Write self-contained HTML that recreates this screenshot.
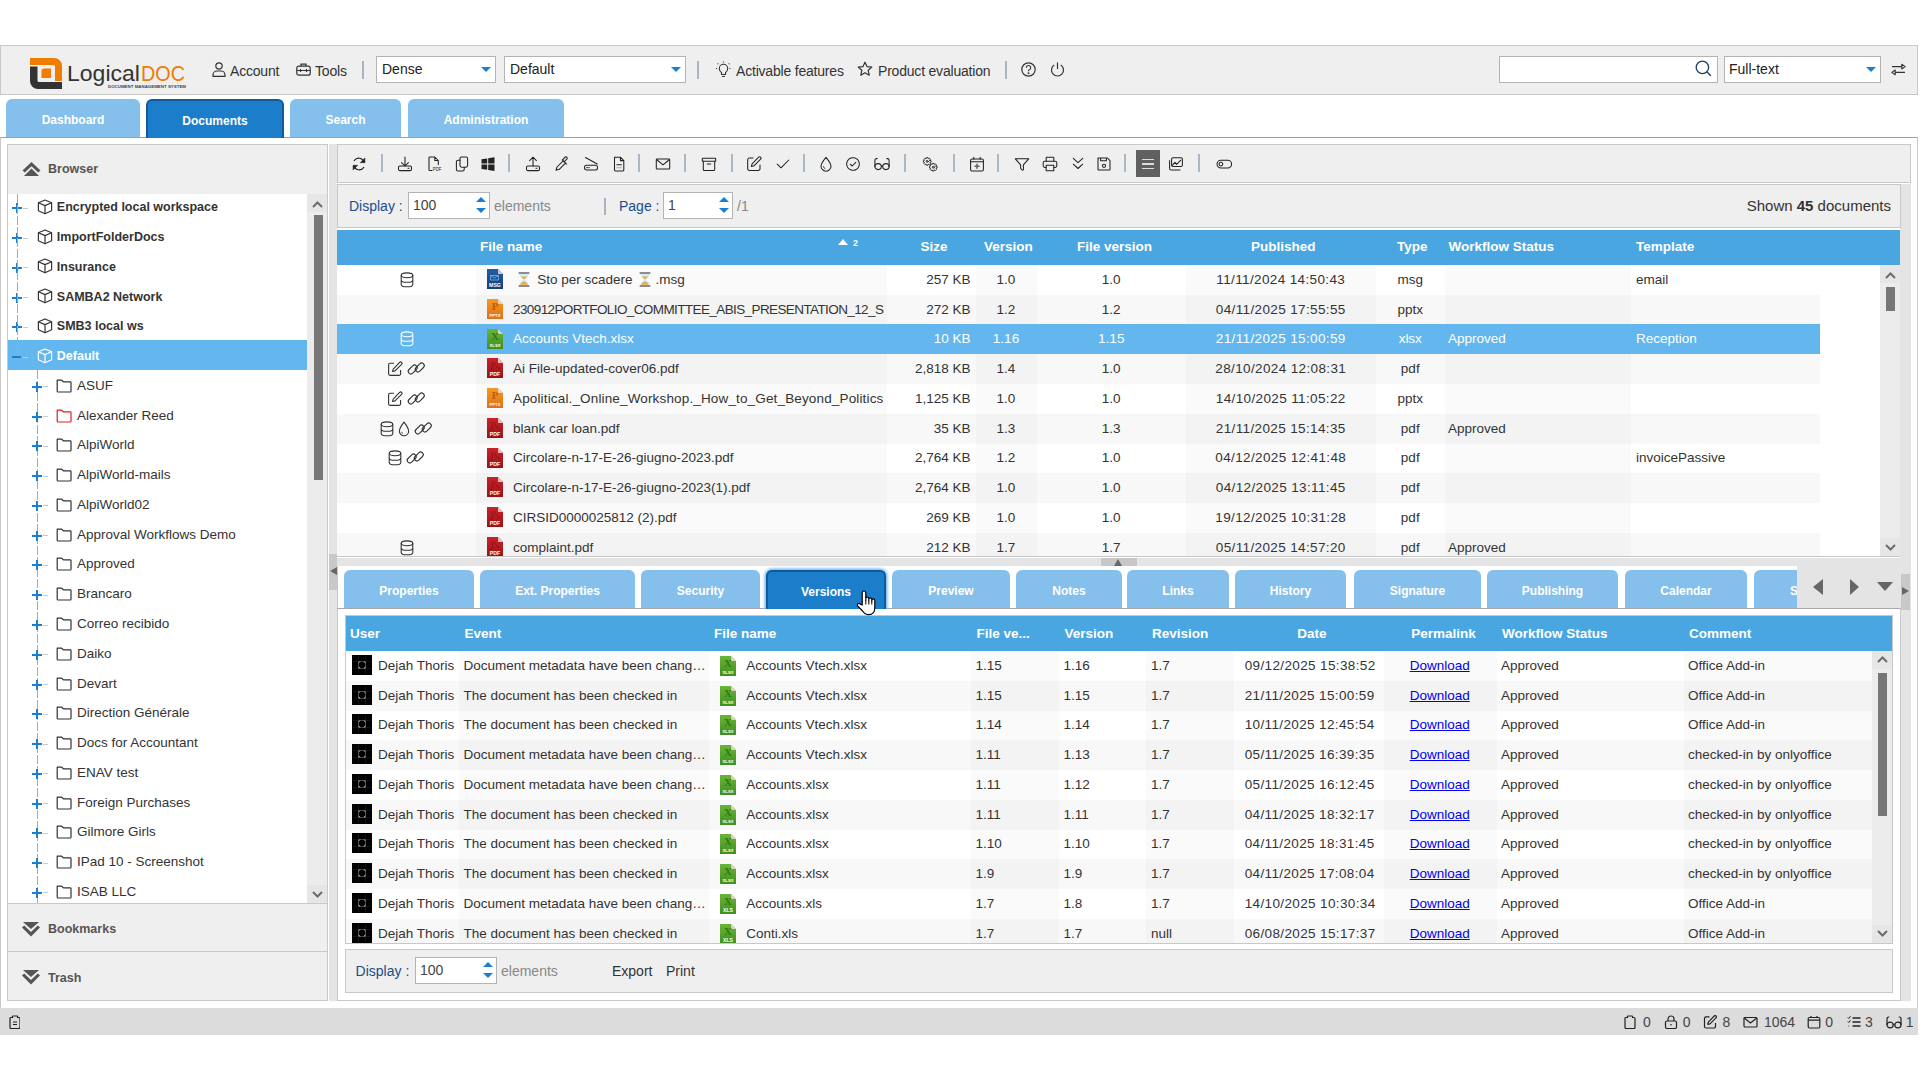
<!DOCTYPE html>
<html><head><meta charset="utf-8">
<style>
*{box-sizing:border-box;margin:0;padding:0}
html,body{width:1920px;height:1080px;overflow:hidden;background:#fff;font-family:"Liberation Sans",sans-serif;color:#333}
.a{position:absolute}
#hdr{left:0;top:45px;width:1918px;height:50px;background:#efefef;border:1px solid #c8c8c8}
.tab{position:absolute;top:99px;height:38px;background:#85bfec;border-radius:6px 6px 0 0;color:#fff;font-weight:bold;font-size:12px;text-align:center;line-height:43px}
.tab.on{background:#1c7ecb;border:2px solid #0e5a9c;border-bottom:0;line-height:41px;height:39px}
#main{left:0;top:137px;width:1918px;height:872px;border:1px solid #c8c8c8;border-top-color:#a0a0a0;border-bottom:0;background:#fff}
#status{left:0;top:1008px;width:1918px;height:27px;background:#dcdcdc}
.panel{position:absolute;background:#efefef;border:1px solid #c8c8c8}
.htxt{position:absolute;top:60.5px;height:20px;line-height:20px;font-size:14px;letter-spacing:-0.2px;color:#333;white-space:nowrap}
.hsep{position:absolute;top:61px;width:2px;height:18px;background:#a9b4c0}
.dd{position:absolute;top:56px;height:27px;background:#fff;border:1px solid #b4b4b4;font-size:14px;line-height:25px;padding-left:5px;color:#222}
.dd i{position:absolute;right:4px;top:10px;border-left:5px solid transparent;border-right:5px solid transparent;border-top:5px solid #1a7fd0}
.phd{position:absolute;font-weight:bold;font-size:12.5px;color:#555;line-height:20px;white-space:nowrap}
.tr{font-size:13.5px;line-height:20px;white-space:nowrap;color:#333}
.tr.b{font-weight:bold;font-size:12.5px}
.vdash{width:1px;background:repeating-linear-gradient(#aaa 0 9px,transparent 9px 11px)}
.lbl{font-size:14px;line-height:22px;color:#1a4d8c;white-space:nowrap}
.inp{height:27px;background:#fff;border:1px solid #b4b4b4;font-size:14px;line-height:25px;padding-left:4px;color:#444}
.gh{color:#fff;font-weight:bold;font-size:13.5px;line-height:20px;white-space:nowrap}
.gc{font-size:13.5px;line-height:20px;white-space:nowrap;color:#333}
.dt{letter-spacing:0.37px}
.dtab{position:absolute;top:4px;height:38px;background:#85bfec;border-radius:6px 6px 0 0;color:#fff;font-weight:bold;font-size:12px;text-align:center;line-height:42px;white-space:nowrap;overflow:hidden}
.dtab.on{height:39px;background:#1c7ecb;border:2px solid #0e5a9c;border-bottom:0;line-height:40px;box-shadow:0 0 3px 1px rgba(120,190,245,0.9)}
.stt{top:1012px;font-size:14px;line-height:20px;color:#444}
</style></head><body>
<div id="hdr" class="a"></div>
<svg class="a" style="left:30px;top:58px" width="32" height="31" viewBox="0 0 32 31">
<path d="M0 0H24A8 8 0 0 1 32 8V23H25V8.5A1.5 1.5 0 0 0 23.5 7H0Z" fill="#f07c00"/>
<path d="M0 8.5H7.5V22.5A1.5 1.5 0 0 0 9 24H32V31H8A8 8 0 0 1 0 23Z" fill="#333"/>
<path d="M14 10.5H21V20H11.5V13A2.5 2.5 0 0 1 14 10.5Z" fill="#f07c00"/>
</svg>
<svg class="a" style="left:66px;top:58px" width="124" height="34" viewBox="0 0 124 34">
<text x="1" y="22.5" font-family="Liberation Sans" font-size="22.5" fill="#333" textLength="73" lengthAdjust="spacingAndGlyphs">Logical</text>
<text x="75" y="22.5" font-family="Liberation Sans" font-size="22.5" fill="#f07c00" textLength="44" lengthAdjust="spacingAndGlyphs">DOC</text>
<text x="42" y="30" font-family="Liberation Sans" font-size="4.2" font-weight="bold" fill="#444" textLength="78" lengthAdjust="spacingAndGlyphs">DOCUMENT MANAGEMENT SYSTEM</text>
</svg>
<div class="htxt" style="left:230px">Account</div>
<svg class="a" style="left:212px;top:62px" width="14" height="15" viewBox="0 0 14 15" fill="none" stroke="#333" stroke-width="1.2"><circle cx="7" cy="4" r="3.2"/><path d="M1 14.4V13A4 4 0 0 1 5 9H9A4 4 0 0 1 13 13V14.4Z"/></svg>
<div class="htxt" style="left:315px">Tools</div>
<svg class="a" style="left:296px;top:63px" width="15" height="13" viewBox="0 0 15 13" fill="none" stroke="#333" stroke-width="1.2"><path d="M5 3V1.2H10V3"/><rect x="0.8" y="3.2" width="13.4" height="9" rx="2"/><path d="M0.8 7.5H14.2M4.5 6V9M10.5 6V9"/></svg>
<div class="hsep" style="left:362px"></div>
<div class="dd" style="left:376px;width:120px">Dense<i></i></div>
<div class="dd" style="left:504px;width:182px">Default<i></i></div>
<div class="hsep" style="left:697px"></div>
<svg class="a" style="left:715px;top:61px" width="17" height="17" viewBox="0 0 17 17" fill="none" stroke="#333" stroke-width="1.1"><path d="M6.5 13.5V11.5C5 10.5 4.3 9 4.3 7.5A4.2 4.2 0 0 1 12.7 7.5C12.7 9 12 10.5 10.5 11.5V13.5ZM7 15.5H10"/><path d="M1 7.5H2.5M14.5 7.5H16M2.5 2.5L3.5 3.5M14.5 2.5L13.5 3.5M8.5 0.5V1.8" stroke-dasharray="1 0.6"/></svg>
<div class="htxt" style="left:736px">Activable features</div>
<svg class="a" style="left:857px;top:61px" width="16" height="16" viewBox="0 0 16 16" fill="none" stroke="#333" stroke-width="1.2" stroke-linejoin="round"><path d="M8 1.2L10 5.6L14.8 6.1L11.2 9.3L12.2 14.2L8 11.7L3.8 14.2L4.8 9.3L1.2 6.1L6 5.6Z"/></svg>
<div class="htxt" style="left:878px">Product evaluation</div>
<div class="hsep" style="left:1005px"></div>
<svg class="a" style="left:1021px;top:62px" width="15" height="15" viewBox="0 0 15 15" fill="none" stroke="#333" stroke-width="1.2"><circle cx="7.5" cy="7.5" r="6.7"/><path d="M5.3 5.7A2.2 2.2 0 1 1 8.2 7.8C7.6 8.1 7.5 8.5 7.5 9.3"/><circle cx="7.5" cy="11.2" r="0.4" fill="#333"/></svg>
<svg class="a" style="left:1050px;top:62px" width="15" height="15" viewBox="0 0 15 15" fill="none" stroke="#333" stroke-width="1.2"><path d="M4.2 3A6 6 0 1 0 10.8 3M7.5 0.5V7"/></svg>
<div class="a" style="left:1499px;top:56px;width:219px;height:27px;background:#fff;border:1px solid #b4b4b4"></div>
<svg class="a" style="left:1695px;top:60px" width="17" height="17" viewBox="0 0 17 17" fill="none" stroke="#1b3f6b" stroke-width="1.3"><circle cx="7.4" cy="7.4" r="6.2"/><path d="M11.8 11.8L15.8 15.8"/></svg>
<div class="dd" style="left:1724px;width:157px;padding-left:4px">Full-text<i></i></div>
<svg class="a" style="left:1891px;top:63px" width="15" height="13" viewBox="0 0 15 13" fill="none" stroke="#333" stroke-width="1.1" stroke-linejoin="round"><path d="M1 3.6H10.8M10.8 1.2L14.2 3.6L10.8 6Z M14 9.4H4.2M4.2 7L0.8 9.4L4.2 11.8Z"/></svg>
<div id="main" class="a"></div>
<div class="tab" style="left:6px;width:134px">Dashboard</div>
<div class="tab on" style="left:146px;width:138px">Documents</div>
<div class="tab" style="left:290px;width:111px">Search</div>
<div class="tab" style="left:408px;width:156px">Administration</div>
<div id="status" class="a"></div>
<div class="panel" style="left:7px;top:144px;width:321px;height:51px"></div>
<svg class="a" style="left:22px;top:162px" width="19" height="14" viewBox="0 0 19 14"><path d="M9.5 0L18.5 8.5L16.2 10.6L9.5 4.2L2.8 10.6L0.5 8.5Z" fill="#555"/><path d="M9.5 6.5L17 14H2Z" fill="#555"/></svg>
<div class="phd" style="left:48px;top:159px">Browser</div>
<div class="a" style="left:7px;top:194px;width:321px;height:710px;border:1px solid #c8c8c8;border-top:0;background:#fff;overflow:hidden">
<div class="a vdash" style="left:29px;top:176.2px;height:533.8px"></div>
<div class="a" style="left:4px;top:13.2px;width:10px;height:2px;background:#1a7fd0"></div><div class="a" style="left:8px;top:9.2px;width:2px;height:10px;background:#1a7fd0"></div>
<div class="a" style="left:15px;top:13.7px;width:5px;height:1px;background:#c8c8c8"></div>
<div class="a" style="left:28.5px;top:4.7px"><svg width="16" height="16" viewBox="0 0 16 16" fill="none" stroke="#333" stroke-width="1.2" stroke-linejoin="round"><path d="M8 1L14.6 3.8V11.8L8 14.8L1.4 11.8V3.8Z"/><path d="M1.4 3.8L8 6.6L14.6 3.8M8 6.6V14.8"/></svg></div>
<div class="a tr b" style="left:48.8px;top:3.2px;">Encrypted local workspace</div>
<div class="a" style="left:4px;top:43.0px;width:10px;height:2px;background:#1a7fd0"></div><div class="a" style="left:8px;top:39.0px;width:2px;height:10px;background:#1a7fd0"></div>
<div class="a" style="left:15px;top:43.5px;width:5px;height:1px;background:#c8c8c8"></div>
<div class="a" style="left:28.5px;top:34.5px"><svg width="16" height="16" viewBox="0 0 16 16" fill="none" stroke="#333" stroke-width="1.2" stroke-linejoin="round"><path d="M8 1L14.6 3.8V11.8L8 14.8L1.4 11.8V3.8Z"/><path d="M1.4 3.8L8 6.6L14.6 3.8M8 6.6V14.8"/></svg></div>
<div class="a tr b" style="left:48.8px;top:33.0px;">ImportFolderDocs</div>
<div class="a" style="left:4px;top:72.7px;width:10px;height:2px;background:#1a7fd0"></div><div class="a" style="left:8px;top:68.7px;width:2px;height:10px;background:#1a7fd0"></div>
<div class="a" style="left:15px;top:73.2px;width:5px;height:1px;background:#c8c8c8"></div>
<div class="a" style="left:28.5px;top:64.2px"><svg width="16" height="16" viewBox="0 0 16 16" fill="none" stroke="#333" stroke-width="1.2" stroke-linejoin="round"><path d="M8 1L14.6 3.8V11.8L8 14.8L1.4 11.8V3.8Z"/><path d="M1.4 3.8L8 6.6L14.6 3.8M8 6.6V14.8"/></svg></div>
<div class="a tr b" style="left:48.8px;top:62.7px;">Insurance</div>
<div class="a" style="left:4px;top:102.5px;width:10px;height:2px;background:#1a7fd0"></div><div class="a" style="left:8px;top:98.5px;width:2px;height:10px;background:#1a7fd0"></div>
<div class="a" style="left:15px;top:103.0px;width:5px;height:1px;background:#c8c8c8"></div>
<div class="a" style="left:28.5px;top:94.0px"><svg width="16" height="16" viewBox="0 0 16 16" fill="none" stroke="#333" stroke-width="1.2" stroke-linejoin="round"><path d="M8 1L14.6 3.8V11.8L8 14.8L1.4 11.8V3.8Z"/><path d="M1.4 3.8L8 6.6L14.6 3.8M8 6.6V14.8"/></svg></div>
<div class="a tr b" style="left:48.8px;top:92.5px;">SAMBA2 Network</div>
<div class="a" style="left:4px;top:132.3px;width:10px;height:2px;background:#1a7fd0"></div><div class="a" style="left:8px;top:128.3px;width:2px;height:10px;background:#1a7fd0"></div>
<div class="a" style="left:15px;top:132.8px;width:5px;height:1px;background:#c8c8c8"></div>
<div class="a" style="left:28.5px;top:123.8px"><svg width="16" height="16" viewBox="0 0 16 16" fill="none" stroke="#333" stroke-width="1.2" stroke-linejoin="round"><path d="M8 1L14.6 3.8V11.8L8 14.8L1.4 11.8V3.8Z"/><path d="M1.4 3.8L8 6.6L14.6 3.8M8 6.6V14.8"/></svg></div>
<div class="a tr b" style="left:48.8px;top:122.3px;">SMB3 local ws</div>
<div class="a" style="left:0;top:146.45px;width:299px;height:29.77px;background:#63b7ee"></div>
<div class="a" style="left:4px;top:162.0px;width:9px;height:2px;background:#1a7fd0"></div>
<div class="a" style="left:15px;top:162.5px;width:5px;height:1px;background:#c8c8c8"></div>
<div class="a" style="left:28.5px;top:153.5px"><svg width="16" height="16" viewBox="0 0 16 16" fill="none" stroke="#fff" stroke-width="1.2" stroke-linejoin="round"><path d="M8 1L14.6 3.8V11.8L8 14.8L1.4 11.8V3.8Z"/><path d="M1.4 3.8L8 6.6L14.6 3.8M8 6.6V14.8"/></svg></div>
<div class="a tr b" style="left:48.8px;top:152.0px;color:#fff">Default</div>
<div class="a" style="left:24px;top:191.8px;width:10px;height:2px;background:#1a7fd0"></div><div class="a" style="left:28px;top:187.8px;width:2px;height:10px;background:#1a7fd0"></div>
<div class="a" style="left:35px;top:192.3px;width:5px;height:1px;background:#c8c8c8"></div>
<div class="a" style="left:48px;top:184.8px"><svg width="16" height="14" viewBox="0 0 16 14" fill="none" stroke="#333" stroke-width="1.2" stroke-linejoin="round"><path d="M1.2 1.2H5.6L7.4 2.8H14.2A0.8 0.8 0 0 1 15 3.6V12.2A0.8 0.8 0 0 1 14.2 13H2A0.8 0.8 0 0 1 1.2 12.2Z"/></svg></div>
<div class="a tr" style="left:69px;top:181.8px">ASUF</div>
<div class="a" style="left:24px;top:221.6px;width:10px;height:2px;background:#1a7fd0"></div><div class="a" style="left:28px;top:217.6px;width:2px;height:10px;background:#1a7fd0"></div>
<div class="a" style="left:35px;top:222.1px;width:5px;height:1px;background:#c8c8c8"></div>
<div class="a" style="left:48px;top:214.6px"><svg width="16" height="14" viewBox="0 0 16 14" fill="none" stroke="#e02020" stroke-width="1.2" stroke-linejoin="round"><path d="M1.2 1.2H5.6L7.4 2.8H14.2A0.8 0.8 0 0 1 15 3.6V12.2A0.8 0.8 0 0 1 14.2 13H2A0.8 0.8 0 0 1 1.2 12.2Z"/></svg></div>
<div class="a tr" style="left:69px;top:211.6px">Alexander Reed</div>
<div class="a" style="left:24px;top:251.3px;width:10px;height:2px;background:#1a7fd0"></div><div class="a" style="left:28px;top:247.3px;width:2px;height:10px;background:#1a7fd0"></div>
<div class="a" style="left:35px;top:251.8px;width:5px;height:1px;background:#c8c8c8"></div>
<div class="a" style="left:48px;top:244.3px"><svg width="16" height="14" viewBox="0 0 16 14" fill="none" stroke="#333" stroke-width="1.2" stroke-linejoin="round"><path d="M1.2 1.2H5.6L7.4 2.8H14.2A0.8 0.8 0 0 1 15 3.6V12.2A0.8 0.8 0 0 1 14.2 13H2A0.8 0.8 0 0 1 1.2 12.2Z"/></svg></div>
<div class="a tr" style="left:69px;top:241.3px">AlpiWorld</div>
<div class="a" style="left:24px;top:281.1px;width:10px;height:2px;background:#1a7fd0"></div><div class="a" style="left:28px;top:277.1px;width:2px;height:10px;background:#1a7fd0"></div>
<div class="a" style="left:35px;top:281.6px;width:5px;height:1px;background:#c8c8c8"></div>
<div class="a" style="left:48px;top:274.1px"><svg width="16" height="14" viewBox="0 0 16 14" fill="none" stroke="#333" stroke-width="1.2" stroke-linejoin="round"><path d="M1.2 1.2H5.6L7.4 2.8H14.2A0.8 0.8 0 0 1 15 3.6V12.2A0.8 0.8 0 0 1 14.2 13H2A0.8 0.8 0 0 1 1.2 12.2Z"/></svg></div>
<div class="a tr" style="left:69px;top:271.1px">AlpiWorld-mails</div>
<div class="a" style="left:24px;top:310.9px;width:10px;height:2px;background:#1a7fd0"></div><div class="a" style="left:28px;top:306.9px;width:2px;height:10px;background:#1a7fd0"></div>
<div class="a" style="left:35px;top:311.4px;width:5px;height:1px;background:#c8c8c8"></div>
<div class="a" style="left:48px;top:303.9px"><svg width="16" height="14" viewBox="0 0 16 14" fill="none" stroke="#333" stroke-width="1.2" stroke-linejoin="round"><path d="M1.2 1.2H5.6L7.4 2.8H14.2A0.8 0.8 0 0 1 15 3.6V12.2A0.8 0.8 0 0 1 14.2 13H2A0.8 0.8 0 0 1 1.2 12.2Z"/></svg></div>
<div class="a tr" style="left:69px;top:300.9px">AlpiWorld02</div>
<div class="a" style="left:24px;top:340.7px;width:10px;height:2px;background:#1a7fd0"></div><div class="a" style="left:28px;top:336.7px;width:2px;height:10px;background:#1a7fd0"></div>
<div class="a" style="left:35px;top:341.2px;width:5px;height:1px;background:#c8c8c8"></div>
<div class="a" style="left:48px;top:333.7px"><svg width="16" height="14" viewBox="0 0 16 14" fill="none" stroke="#333" stroke-width="1.2" stroke-linejoin="round"><path d="M1.2 1.2H5.6L7.4 2.8H14.2A0.8 0.8 0 0 1 15 3.6V12.2A0.8 0.8 0 0 1 14.2 13H2A0.8 0.8 0 0 1 1.2 12.2Z"/></svg></div>
<div class="a tr" style="left:69px;top:330.7px">Approval Workflows Demo</div>
<div class="a" style="left:24px;top:370.4px;width:10px;height:2px;background:#1a7fd0"></div><div class="a" style="left:28px;top:366.4px;width:2px;height:10px;background:#1a7fd0"></div>
<div class="a" style="left:35px;top:370.9px;width:5px;height:1px;background:#c8c8c8"></div>
<div class="a" style="left:48px;top:363.4px"><svg width="16" height="14" viewBox="0 0 16 14" fill="none" stroke="#333" stroke-width="1.2" stroke-linejoin="round"><path d="M1.2 1.2H5.6L7.4 2.8H14.2A0.8 0.8 0 0 1 15 3.6V12.2A0.8 0.8 0 0 1 14.2 13H2A0.8 0.8 0 0 1 1.2 12.2Z"/></svg></div>
<div class="a tr" style="left:69px;top:360.4px">Approved</div>
<div class="a" style="left:24px;top:400.2px;width:10px;height:2px;background:#1a7fd0"></div><div class="a" style="left:28px;top:396.2px;width:2px;height:10px;background:#1a7fd0"></div>
<div class="a" style="left:35px;top:400.7px;width:5px;height:1px;background:#c8c8c8"></div>
<div class="a" style="left:48px;top:393.2px"><svg width="16" height="14" viewBox="0 0 16 14" fill="none" stroke="#333" stroke-width="1.2" stroke-linejoin="round"><path d="M1.2 1.2H5.6L7.4 2.8H14.2A0.8 0.8 0 0 1 15 3.6V12.2A0.8 0.8 0 0 1 14.2 13H2A0.8 0.8 0 0 1 1.2 12.2Z"/></svg></div>
<div class="a tr" style="left:69px;top:390.2px">Brancaro</div>
<div class="a" style="left:24px;top:430.0px;width:10px;height:2px;background:#1a7fd0"></div><div class="a" style="left:28px;top:426.0px;width:2px;height:10px;background:#1a7fd0"></div>
<div class="a" style="left:35px;top:430.5px;width:5px;height:1px;background:#c8c8c8"></div>
<div class="a" style="left:48px;top:423.0px"><svg width="16" height="14" viewBox="0 0 16 14" fill="none" stroke="#333" stroke-width="1.2" stroke-linejoin="round"><path d="M1.2 1.2H5.6L7.4 2.8H14.2A0.8 0.8 0 0 1 15 3.6V12.2A0.8 0.8 0 0 1 14.2 13H2A0.8 0.8 0 0 1 1.2 12.2Z"/></svg></div>
<div class="a tr" style="left:69px;top:420.0px">Correo recibido</div>
<div class="a" style="left:24px;top:459.7px;width:10px;height:2px;background:#1a7fd0"></div><div class="a" style="left:28px;top:455.7px;width:2px;height:10px;background:#1a7fd0"></div>
<div class="a" style="left:35px;top:460.2px;width:5px;height:1px;background:#c8c8c8"></div>
<div class="a" style="left:48px;top:452.7px"><svg width="16" height="14" viewBox="0 0 16 14" fill="none" stroke="#333" stroke-width="1.2" stroke-linejoin="round"><path d="M1.2 1.2H5.6L7.4 2.8H14.2A0.8 0.8 0 0 1 15 3.6V12.2A0.8 0.8 0 0 1 14.2 13H2A0.8 0.8 0 0 1 1.2 12.2Z"/></svg></div>
<div class="a tr" style="left:69px;top:449.7px">Daiko</div>
<div class="a" style="left:24px;top:489.5px;width:10px;height:2px;background:#1a7fd0"></div><div class="a" style="left:28px;top:485.5px;width:2px;height:10px;background:#1a7fd0"></div>
<div class="a" style="left:35px;top:490.0px;width:5px;height:1px;background:#c8c8c8"></div>
<div class="a" style="left:48px;top:482.5px"><svg width="16" height="14" viewBox="0 0 16 14" fill="none" stroke="#333" stroke-width="1.2" stroke-linejoin="round"><path d="M1.2 1.2H5.6L7.4 2.8H14.2A0.8 0.8 0 0 1 15 3.6V12.2A0.8 0.8 0 0 1 14.2 13H2A0.8 0.8 0 0 1 1.2 12.2Z"/></svg></div>
<div class="a tr" style="left:69px;top:479.5px">Devart</div>
<div class="a" style="left:24px;top:519.3px;width:10px;height:2px;background:#1a7fd0"></div><div class="a" style="left:28px;top:515.3px;width:2px;height:10px;background:#1a7fd0"></div>
<div class="a" style="left:35px;top:519.8px;width:5px;height:1px;background:#c8c8c8"></div>
<div class="a" style="left:48px;top:512.3px"><svg width="16" height="14" viewBox="0 0 16 14" fill="none" stroke="#333" stroke-width="1.2" stroke-linejoin="round"><path d="M1.2 1.2H5.6L7.4 2.8H14.2A0.8 0.8 0 0 1 15 3.6V12.2A0.8 0.8 0 0 1 14.2 13H2A0.8 0.8 0 0 1 1.2 12.2Z"/></svg></div>
<div class="a tr" style="left:69px;top:509.3px">Direction Générale</div>
<div class="a" style="left:24px;top:549.0px;width:10px;height:2px;background:#1a7fd0"></div><div class="a" style="left:28px;top:545.0px;width:2px;height:10px;background:#1a7fd0"></div>
<div class="a" style="left:35px;top:549.5px;width:5px;height:1px;background:#c8c8c8"></div>
<div class="a" style="left:48px;top:542.0px"><svg width="16" height="14" viewBox="0 0 16 14" fill="none" stroke="#333" stroke-width="1.2" stroke-linejoin="round"><path d="M1.2 1.2H5.6L7.4 2.8H14.2A0.8 0.8 0 0 1 15 3.6V12.2A0.8 0.8 0 0 1 14.2 13H2A0.8 0.8 0 0 1 1.2 12.2Z"/></svg></div>
<div class="a tr" style="left:69px;top:539.0px">Docs for Accountant</div>
<div class="a" style="left:24px;top:578.8px;width:10px;height:2px;background:#1a7fd0"></div><div class="a" style="left:28px;top:574.8px;width:2px;height:10px;background:#1a7fd0"></div>
<div class="a" style="left:35px;top:579.3px;width:5px;height:1px;background:#c8c8c8"></div>
<div class="a" style="left:48px;top:571.8px"><svg width="16" height="14" viewBox="0 0 16 14" fill="none" stroke="#333" stroke-width="1.2" stroke-linejoin="round"><path d="M1.2 1.2H5.6L7.4 2.8H14.2A0.8 0.8 0 0 1 15 3.6V12.2A0.8 0.8 0 0 1 14.2 13H2A0.8 0.8 0 0 1 1.2 12.2Z"/></svg></div>
<div class="a tr" style="left:69px;top:568.8px">ENAV test</div>
<div class="a" style="left:24px;top:608.6px;width:10px;height:2px;background:#1a7fd0"></div><div class="a" style="left:28px;top:604.6px;width:2px;height:10px;background:#1a7fd0"></div>
<div class="a" style="left:35px;top:609.1px;width:5px;height:1px;background:#c8c8c8"></div>
<div class="a" style="left:48px;top:601.6px"><svg width="16" height="14" viewBox="0 0 16 14" fill="none" stroke="#333" stroke-width="1.2" stroke-linejoin="round"><path d="M1.2 1.2H5.6L7.4 2.8H14.2A0.8 0.8 0 0 1 15 3.6V12.2A0.8 0.8 0 0 1 14.2 13H2A0.8 0.8 0 0 1 1.2 12.2Z"/></svg></div>
<div class="a tr" style="left:69px;top:598.6px">Foreign Purchases</div>
<div class="a" style="left:24px;top:638.4px;width:10px;height:2px;background:#1a7fd0"></div><div class="a" style="left:28px;top:634.4px;width:2px;height:10px;background:#1a7fd0"></div>
<div class="a" style="left:35px;top:638.9px;width:5px;height:1px;background:#c8c8c8"></div>
<div class="a" style="left:48px;top:631.4px"><svg width="16" height="14" viewBox="0 0 16 14" fill="none" stroke="#333" stroke-width="1.2" stroke-linejoin="round"><path d="M1.2 1.2H5.6L7.4 2.8H14.2A0.8 0.8 0 0 1 15 3.6V12.2A0.8 0.8 0 0 1 14.2 13H2A0.8 0.8 0 0 1 1.2 12.2Z"/></svg></div>
<div class="a tr" style="left:69px;top:628.4px">Gilmore Girls</div>
<div class="a" style="left:24px;top:668.1px;width:10px;height:2px;background:#1a7fd0"></div><div class="a" style="left:28px;top:664.1px;width:2px;height:10px;background:#1a7fd0"></div>
<div class="a" style="left:35px;top:668.6px;width:5px;height:1px;background:#c8c8c8"></div>
<div class="a" style="left:48px;top:661.1px"><svg width="16" height="14" viewBox="0 0 16 14" fill="none" stroke="#333" stroke-width="1.2" stroke-linejoin="round"><path d="M1.2 1.2H5.6L7.4 2.8H14.2A0.8 0.8 0 0 1 15 3.6V12.2A0.8 0.8 0 0 1 14.2 13H2A0.8 0.8 0 0 1 1.2 12.2Z"/></svg></div>
<div class="a tr" style="left:69px;top:658.1px">IPad 10 - Screenshot</div>
<div class="a" style="left:24px;top:697.9px;width:10px;height:2px;background:#1a7fd0"></div><div class="a" style="left:28px;top:693.9px;width:2px;height:10px;background:#1a7fd0"></div>
<div class="a" style="left:35px;top:698.4px;width:5px;height:1px;background:#c8c8c8"></div>
<div class="a" style="left:48px;top:690.9px"><svg width="16" height="14" viewBox="0 0 16 14" fill="none" stroke="#333" stroke-width="1.2" stroke-linejoin="round"><path d="M1.2 1.2H5.6L7.4 2.8H14.2A0.8 0.8 0 0 1 15 3.6V12.2A0.8 0.8 0 0 1 14.2 13H2A0.8 0.8 0 0 1 1.2 12.2Z"/></svg></div>
<div class="a tr" style="left:69px;top:687.9px">ISAB LLC</div>
<div class="a vdash" style="left:9px;top:0px;height:162.0px"></div>
<div class="a" style="left:299px;top:0;width:20px;height:709px;background:#ececec"></div>
<div class="a" style="left:299px;top:0;width:20px;height:18px;background:#e6e6e6"></div>
<svg class="a" style="left:304px;top:7px" width="11" height="7" viewBox="0 0 11 7" fill="none" stroke="#6c6c6c" stroke-width="2"><path d="M1 6L5.5 1.5L10 6"/></svg>
<div class="a" style="left:306px;top:21px;width:9px;height:265px;background:#777"></div>
<div class="a" style="left:299px;top:691px;width:20px;height:18px;background:#e6e6e6"></div>
<svg class="a" style="left:304px;top:697px" width="11" height="7" viewBox="0 0 11 7" fill="none" stroke="#6c6c6c" stroke-width="2"><path d="M1 1L5.5 5.5L10 1"/></svg>
</div>
<div class="panel" style="left:7px;top:903px;width:321px;height:49px"></div>
<svg class="a" style="left:22px;top:922px" width="18" height="15" viewBox="0 0 18 15"><path d="M1 0H17L9 7Z" fill="#555"/><path d="M0 5.5L2.2 3.5L9 10L15.8 3.5L18 5.5L9 14.5Z" fill="#555"/></svg>
<div class="phd" style="left:48px;top:919px">Bookmarks</div>
<div class="panel" style="left:7px;top:951px;width:321px;height:50px"></div>
<svg class="a" style="left:22px;top:970px" width="18" height="15" viewBox="0 0 18 15"><path d="M1 0H17L9 7Z" fill="#555"/><path d="M0 5.5L2.2 3.5L9 10L15.8 3.5L18 5.5L9 14.5Z" fill="#555"/></svg>
<div class="phd" style="left:48px;top:968px">Trash</div>
<div class="a" style="left:329px;top:144px;width:8px;height:857px;background:#e4e4e4"></div>
<div class="a" style="left:329px;top:554px;width:8px;height:36px;background:#c8c8c8"></div>
<div class="a" style="left:330px;top:567px;width:0;height:0;border-top:4.5px solid transparent;border-bottom:4.5px solid transparent;border-right:7px solid #666"></div><div class="panel" style="left:337px;top:144px;width:1574px;height:39px"></div>
<svg class="a" style="left:350.9px;top:156.0px" width="16" height="16" viewBox="0 0 16 16" fill="none" stroke="#222" stroke-width="1.05" stroke-linecap="round" stroke-linejoin="round"><path d="M13.2 6.2A5.6 5.6 0 0 0 3.2 4.6M2.8 9.8A5.6 5.6 0 0 0 12.8 11.4"/><path d="M13.8 2.5V6.6H9.8Z M2.2 13.5V9.4H6.2Z" fill="#222" stroke-width="0.8"/></svg>
<div class="a" style="left:380.8px;top:154px;width:2px;height:18px;background:#a9b8c8"></div>
<svg class="a" style="left:397.0px;top:156.0px" width="16" height="16" viewBox="0 0 16 16" fill="none" stroke="#222" stroke-width="1.05" stroke-linecap="round" stroke-linejoin="round"><rect x="1.5" y="10" width="13" height="4.6" rx="1.4"/><path d="M8 1V10M4.6 6.6L8 10L11.4 6.6M11 12.3H12"/></svg>
<svg class="a" style="left:425.5px;top:156.0px" width="16" height="16" viewBox="0 0 16 16" fill="none" stroke="#222" stroke-width="1.05" stroke-linecap="round" stroke-linejoin="round"><path d="M6 14.5H3.8A0.8 0.8 0 0 1 3 13.7V1.8A0.8 0.8 0 0 1 3.8 1H8.8L12.3 4.5V8.5M8.8 1V4.5H12.3"/><text x="6.8" y="15.2" font-size="5.4" font-family="Liberation Sans" fill="#222" stroke="none" textLength="8.6" lengthAdjust="spacingAndGlyphs">PDF</text></svg>
<svg class="a" style="left:454.0px;top:156.0px" width="16" height="16" viewBox="0 0 16 16" fill="none" stroke="#222" stroke-width="1.05" stroke-linecap="round" stroke-linejoin="round"><rect x="6" y="1" width="7.6" height="10.2" rx="1.6"/><path d="M6 4.2H4A1.6 1.6 0 0 0 2.4 5.8V13.4A1.6 1.6 0 0 0 4 15H8.6A1.6 1.6 0 0 0 10.2 13.4V11.2"/></svg>
<svg class="a" style="left:480.0px;top:156.0px" width="16" height="16" viewBox="0 0 16 16" fill="none" stroke="#222" stroke-width="1.05" stroke-linecap="round" stroke-linejoin="round"><path d="M1.5 3.2L7.2 2.4V7.6H1.5Z M8.2 2.2L14.5 1.3V7.6H8.2Z M1.5 8.6H7.2V13.8L1.5 13Z M8.2 8.6H14.5V14.9L8.2 14Z" fill="#222" stroke="none"/></svg>
<div class="a" style="left:508.0px;top:154px;width:2px;height:18px;background:#a9b8c8"></div>
<svg class="a" style="left:524.8px;top:156.0px" width="16" height="16" viewBox="0 0 16 16" fill="none" stroke="#222" stroke-width="1.05" stroke-linecap="round" stroke-linejoin="round"><rect x="1.5" y="10" width="13" height="4.6" rx="1.4"/><path d="M8 1.2V10M4.6 4.6L8 1.2L11.4 4.6M11 12.3H12"/></svg>
<svg class="a" style="left:554.0px;top:156.0px" width="16" height="16" viewBox="0 0 16 16" fill="none" stroke="#222" stroke-width="1.05" stroke-linecap="round" stroke-linejoin="round"><path d="M9.4 4.6L3 11L2 14.3L5.3 13.3L11.7 6.9M8.2 3.8L12.5 8.1M10.3 5.6L12.6 3.3A1.6 1.6 0 0 0 12.9 1.2A1.6 1.6 0 0 0 10.8 1.4L8.7 3.9"/></svg>
<svg class="a" style="left:582.6px;top:156.0px" width="16" height="16" viewBox="0 0 16 16" fill="none" stroke="#222" stroke-width="1.05" stroke-linecap="round" stroke-linejoin="round"><path d="M2.5 1.5L14.2 8"/><rect x="1.5" y="9.2" width="13" height="4.8" rx="2"/><path d="M3.8 11.6H4.4M5.8 11.6H6.2"/></svg>
<svg class="a" style="left:610.5px;top:156.0px" width="16" height="16" viewBox="0 0 16 16" fill="none" stroke="#222" stroke-width="1.05" stroke-linecap="round" stroke-linejoin="round"><path d="M3.5 1.2H9.4L12.8 4.6V14A0.9 0.9 0 0 1 11.9 14.9H4.4A0.9 0.9 0 0 1 3.5 14Z M9.4 1.2V4.6H12.8M5.8 8.8H10.4"/><path d="M5.8 11.8H10.4" stroke="#aaa"/></svg>
<div class="a" style="left:637.8px;top:154px;width:2px;height:18px;background:#a9b8c8"></div>
<svg class="a" style="left:654.8px;top:156.0px" width="16" height="16" viewBox="0 0 16 16" fill="none" stroke="#222" stroke-width="1.05" stroke-linecap="round" stroke-linejoin="round"><rect x="1.3" y="3" width="13.4" height="10" rx="0.8"/><path d="M1.5 3.5L8 8.8L14.5 3.5"/></svg>
<div class="a" style="left:683.9px;top:154px;width:2px;height:18px;background:#a9b8c8"></div>
<svg class="a" style="left:700.6px;top:156.0px" width="16" height="16" viewBox="0 0 16 16" fill="none" stroke="#222" stroke-width="1.05" stroke-linecap="round" stroke-linejoin="round"><rect x="1.3" y="2.3" width="13.4" height="3" rx="0.5"/><path d="M2.3 5.3V13.5A1 1 0 0 0 3.3 14.5H12.7A1 1 0 0 0 13.7 13.5V5.3M6.3 8H9.7"/></svg>
<div class="a" style="left:730.8px;top:154px;width:2px;height:18px;background:#a9b8c8"></div>
<svg class="a" style="left:746.2px;top:156.0px" width="16" height="16" viewBox="0 0 16 16" fill="none" stroke="#222" stroke-width="1.05" stroke-linecap="round" stroke-linejoin="round"><path d="M7 2H3.5A1.8 1.8 0 0 0 1.7 3.8V12.7A1.8 1.8 0 0 0 3.5 14.5H12.2A1.8 1.8 0 0 0 14 12.7V9"/><path d="M12.6 1.2A1.3 1.3 0 0 1 14.6 3.2L8 9.8L5.4 10.5L6.1 7.9Z"/></svg>
<svg class="a" style="left:774.8px;top:156.0px" width="16" height="16" viewBox="0 0 16 16" fill="none" stroke="#222" stroke-width="1.05" stroke-linecap="round" stroke-linejoin="round"><path d="M2.2 8.2L6 11.8L13.8 4"/></svg>
<div class="a" style="left:802.6px;top:154px;width:2px;height:18px;background:#a9b8c8"></div>
<svg class="a" style="left:818.0px;top:156.0px" width="16" height="16" viewBox="0 0 16 16" fill="none" stroke="#222" stroke-width="1.05" stroke-linecap="round" stroke-linejoin="round"><path d="M8 1.3C8 1.3 3 7.2 3 10.2A5 5 0 0 0 13 10.2C13 7.2 8 1.3 8 1.3Z"/><path d="M5.4 10.6A2.6 2.6 0 0 0 6.9 12.6" stroke-width="0.9"/></svg>
<svg class="a" style="left:844.9px;top:156.0px" width="16" height="16" viewBox="0 0 16 16" fill="none" stroke="#222" stroke-width="1.05" stroke-linecap="round" stroke-linejoin="round"><circle cx="8" cy="8" r="6.3" stroke-dasharray="1.6 0.5"/><path d="M5.3 8.2L7.2 10L10.8 6.4"/></svg>
<svg class="a" style="left:873.5px;top:156.0px" width="16" height="16" viewBox="0 0 16 16" fill="none" stroke="#222" stroke-width="1.05" stroke-linecap="round" stroke-linejoin="round"><ellipse cx="4.1" cy="10.6" rx="3.2" ry="3"/><ellipse cx="11.9" cy="10.6" rx="3.2" ry="3"/><path d="M7.3 10.2Q8 9.5 8.7 10.2M0.9 10.6V4.2A1.6 1.6 0 0 1 2.5 2.6H3.2M15.1 10.6V4.2A1.6 1.6 0 0 0 13.5 2.6H12.8"/></svg>
<div class="a" style="left:903.7px;top:154px;width:2px;height:18px;background:#a9b8c8"></div>
<svg class="a" style="left:922.2px;top:156.0px" width="16" height="16" viewBox="0 0 16 16" fill="none" stroke="#222" stroke-width="1.05" stroke-linecap="round" stroke-linejoin="round"><path d="M7.89 4.32L9.02 4.60L9.02 6.20L7.89 6.48L7.87 6.54L8.47 7.53L7.33 8.67L6.34 8.07L6.28 8.09L6.00 9.22L4.40 9.22L4.12 8.09L4.06 8.07L3.07 8.67L1.93 7.53L2.53 6.54L2.51 6.48L1.38 6.20L1.38 4.60L2.51 4.32L2.53 4.26L1.93 3.27L3.07 2.13L4.06 2.73L4.12 2.71L4.40 1.58L6.00 1.58L6.28 2.71L6.34 2.73L7.33 2.13L8.47 3.27L7.87 4.26Z M13.99 10.12L15.12 10.40L15.12 12.00L13.99 12.28L13.97 12.34L14.57 13.33L13.43 14.47L12.44 13.870L12.38 13.89L12.10 15.02L10.50 15.02L10.22 13.89L10.16 13.87L9.17 14.47L8.03 13.33L8.63 12.34L8.61 12.28L7.48 12.00L7.48 10.40L8.61 10.12L8.63 10.06L8.03 9.07L9.17 7.93L10.16 8.53L10.22 8.51L10.50 7.38L12.10 7.38L12.38 8.51L12.44 8.53L13.43 7.93L14.57 9.070L13.97 10.06Z" stroke-width="0.9"/><circle cx="5.2" cy="5.4" r="1" stroke-width="0.9"/><circle cx="11.3" cy="11.2" r="1" stroke-width="0.9"/></svg>
<div class="a" style="left:952.6px;top:154px;width:2px;height:18px;background:#a9b8c8"></div>
<svg class="a" style="left:969.0px;top:156.0px" width="16" height="16" viewBox="0 0 16 16" fill="none" stroke="#222" stroke-width="1.05" stroke-linecap="round" stroke-linejoin="round"><rect x="1.6" y="3" width="12.8" height="12" rx="1.4"/><path d="M1.6 5.8H14.4M4.8 1.3V3.2M11.2 1.3V3.2"/><path d="M8 8.3V12.3M6 10.3H10" stroke="#666" stroke-width="1.6"/></svg>
<div class="a" style="left:997.0px;top:154px;width:2px;height:18px;background:#a9b8c8"></div>
<svg class="a" style="left:1013.9px;top:156.0px" width="16" height="16" viewBox="0 0 16 16" fill="none" stroke="#222" stroke-width="1.05" stroke-linecap="round" stroke-linejoin="round"><path d="M1.3 2.8H14.7L9.4 8.8V13.6A0.6 0.6 0 0 1 8.5 14.1L7 12.8A0.6 0.6 0 0 1 6.6 12.3V8.8Z"/></svg>
<svg class="a" style="left:1042.0px;top:156.0px" width="16" height="16" viewBox="0 0 16 16" fill="none" stroke="#222" stroke-width="1.05" stroke-linecap="round" stroke-linejoin="round"><path d="M4.2 5.2V1.8A0.6 0.6 0 0 1 4.8 1.2H11.2A0.6 0.6 0 0 1 11.8 1.8V5.2"/><rect x="1.2" y="5.2" width="13.6" height="6.2" rx="1.6"/><rect x="4.2" y="9.2" width="7.6" height="5.6" fill="#efefef"/></svg>
<svg class="a" style="left:1069.9px;top:156.0px" width="16" height="16" viewBox="0 0 16 16" fill="none" stroke="#222" stroke-width="1.05" stroke-linecap="round" stroke-linejoin="round"><path d="M3.3 2.3L8 6.6L12.7 2.3M3.3 8.2L8 12.5L12.7 8.2"/></svg>
<svg class="a" style="left:1095.9px;top:156.0px" width="16" height="16" viewBox="0 0 16 16" fill="none" stroke="#222" stroke-width="1.05" stroke-linecap="round" stroke-linejoin="round"><path d="M2 2H11.4L14 4.6V13.4A0.6 0.6 0 0 1 13.4 14H2.6A0.6 0.6 0 0 1 2 13.4Z M4.6 2V4.8H10.4V2"/><circle cx="8" cy="9.8" r="1.6"/></svg>
<div class="a" style="left:1123.7px;top:154px;width:2px;height:18px;background:#a9b8c8"></div>
<div class="a" style="left:1136px;top:150px;width:24px;height:27px;background:#606060"></div>
<div class="a" style="left:1142px;top:158.5px;width:12px;height:1.5px;background:#ddd"></div>
<div class="a" style="left:1142px;top:163px;width:12px;height:1.5px;background:#ddd"></div>
<div class="a" style="left:1142px;top:167.5px;width:12px;height:1.5px;background:#ddd"></div>
<svg class="a" style="left:1168.0px;top:156.0px" width="16" height="16" viewBox="0 0 16 16" fill="none" stroke="#222" stroke-width="1.05" stroke-linecap="round" stroke-linejoin="round"><rect x="3.6" y="1.8" width="10.8" height="8.6" rx="1.4"/><path d="M4.2 9.4L7 6.4L8.6 8.4L12.8 4.2M1.6 4.4V12.4A1.6 1.6 0 0 0 3.2 14H12"/></svg>
<div class="a" style="left:1197.8px;top:154px;width:2px;height:18px;background:#a9b8c8"></div>
<svg class="a" style="left:1215.7px;top:156.0px" width="16" height="16" viewBox="0 0 16 16" fill="none" stroke="#222" stroke-width="1.05" stroke-linecap="round" stroke-linejoin="round"><rect x="1" y="4.2" width="14.6" height="7.8" rx="3.9"/><circle cx="4.9" cy="8.1" r="1.9"/></svg>
<div class="a" style="left:1900px;top:184px;width:11px;height:817px;background:#e4e4e4"></div>
<div class="a" style="left:1900px;top:574px;width:10px;height:36px;background:#c8c8c8"></div>
<div class="a" style="left:1902px;top:587px;width:0;height:0;border-top:4.5px solid transparent;border-bottom:4.5px solid transparent;border-left:7px solid #666"></div>
<div class="panel" style="left:337px;top:184px;width:1564px;height:44px"></div>
<div class="a lbl" style="left:349px;top:195px">Display :</div>
<div class="a inp" style="left:408px;top:192px;width:82px">100</div><div class="a" style="left:476px;top:196.5px;width:0;height:0;border-left:5.5px solid transparent;border-right:5.5px solid transparent;border-bottom:5px solid #1a7fd0"></div><div class="a" style="left:476px;top:207.8px;width:0;height:0;border-left:5.5px solid transparent;border-right:5.5px solid transparent;border-top:5px solid #1a7fd0"></div>
<div class="a lbl" style="left:494px;top:195px;color:#888">elements</div>
<div class="a" style="left:604px;top:197.5px;width:2px;height:17px;background:#a9b4c0"></div>
<div class="a lbl" style="left:619px;top:195px">Page :</div>
<div class="a inp" style="left:663px;top:192px;width:70px">1</div><div class="a" style="left:719px;top:196.5px;width:0;height:0;border-left:5.5px solid transparent;border-right:5.5px solid transparent;border-bottom:5px solid #1a7fd0"></div><div class="a" style="left:719px;top:207.8px;width:0;height:0;border-left:5.5px solid transparent;border-right:5.5px solid transparent;border-top:5px solid #1a7fd0"></div>
<div class="a lbl" style="left:737px;top:195px;color:#888">/1</div>
<div class="a lbl" style="left:1738px;top:194.5px;color:#333;width:153px;text-align:right;font-size:15px">Shown <b>45</b> documents</div>
<div class="a" style="left:337px;top:230px;width:1563px;height:35px;background:#4aa6e1"></div>
<div class="a gh" style="left:480px;top:237px">File name</div>
<div class="a gh" style="left:920.5px;top:237px">Size</div>
<div class="a gh" style="left:984px;top:237px">Version</div>
<div class="a gh" style="left:1077px;top:237px">File version</div>
<div class="a gh" style="left:1251px;top:237px">Published</div>
<div class="a gh" style="left:1397px;top:237px">Type</div>
<div class="a gh" style="left:1448.5px;top:237px">Workflow Status</div>
<div class="a gh" style="left:1636px;top:237px">Template</div>
<div class="a" style="left:837.5px;top:239px;width:0;height:0;border-left:5px solid transparent;border-right:5px solid transparent;border-bottom:6px solid #fff"></div>
<div class="a" style="left:853px;top:237.5px;color:#fff;font-weight:bold;font-size:9px;line-height:10px">2</div>
<div class="a" style="left:337px;top:265px;width:1563px;height:292px;background:#fff;border-bottom:1px solid #c8c8c8;overflow:hidden">
<div class="a" style="left:0;top:0.00px;width:1483px;height:29.75px;background:#fff"></div>
<div class="a" style="left:138.5px;top:0.00px;width:411.0px;height:29.75px;background:rgba(0,0,0,0.018)"></div>
<div class="a" style="left:638.5px;top:0.00px;width:61.0px;height:29.75px;background:rgba(0,0,0,0.018)"></div>
<div class="a" style="left:849px;top:0.00px;width:189.5px;height:29.75px;background:rgba(0,0,0,0.018)"></div>
<div class="a" style="left:1108px;top:0.00px;width:186px;height:29.75px;background:rgba(0,0,0,0.018)"></div>
<div class="a" style="left:62.5px;top:6.9px"><svg width="14" height="16" viewBox="0 0 14 16" fill="none" stroke="#333" stroke-width="1.1"><ellipse cx="7" cy="3.3" rx="5.8" ry="2.4"/><path d="M1.2 3.3V12.4A5.8 2.4 0 0 0 12.8 12.4V3.3M1.2 7.9A5.8 2.4 0 0 0 12.8 7.9"/></svg></div>
<div class="a" style="left:150px;top:4.1px"><svg width="16" height="20" viewBox="0 0 16 20"><defs><linearGradient id="gmsg" x1="0" y1="0" x2="0" y2="1"><stop offset="0" stop-color="#1f5fa8"/><stop offset="1" stop-color="#123f7a"/></linearGradient></defs><path d="M0 0H11L16 5V20H0Z" fill="url(#gmsg)"/><path d="M11 0V5H16Z" fill="#f3d6d6" opacity="0.85"/><path d="M3.5 6.5H11.5V11H3.5ZM3.5 6.5L7.5 9L11.5 6.5" stroke="#9cc0e8" stroke-width="0.7" fill="none"/><text x="8" y="18.2" font-family="Liberation Sans" font-size="5.2" font-weight="bold" fill="#fff" text-anchor="middle">MSG</text></svg></div>
<div class="a" style="left:180.5px;top:7.4px"><svg width="12" height="15" viewBox="0 0 12 15"><rect x="0.5" y="0" width="11" height="2" rx="0.8" fill="#8d8d8d"/><rect x="0.5" y="13" width="11" height="2" rx="0.8" fill="#8d8d8d"/><path d="M1.5 2C1.5 6 5 6.5 5 7.5S1.5 9 1.5 13H10.5C10.5 9 7 8.5 7 7.5S10.5 6 10.5 2Z" fill="#d5ecf7"/><path d="M3 4.5H9C8.5 6 6.5 6.5 6 7.5C5.5 6.5 3.5 6 3 4.5Z M2.2 12.8C2.5 10.5 5 10 6 9C7 10 9.5 10.5 9.8 12.8Z" fill="#f2a93b"/></svg></div>
<div class="a gc" style="left:200.29999999999995px;top:4.9px;color:#333">Sto per scadere</div>
<div class="a" style="left:302px;top:7.4px"><svg width="12" height="15" viewBox="0 0 12 15"><rect x="0.5" y="0" width="11" height="2" rx="0.8" fill="#8d8d8d"/><rect x="0.5" y="13" width="11" height="2" rx="0.8" fill="#8d8d8d"/><path d="M1.5 2C1.5 6 5 6.5 5 7.5S1.5 9 1.5 13H10.5C10.5 9 7 8.5 7 7.5S10.5 6 10.5 2Z" fill="#d5ecf7"/><path d="M3 4.5H9C8.5 6 6.5 6.5 6 7.5C5.5 6.5 3.5 6 3 4.5Z M2.2 12.8C2.5 10.5 5 10 6 9C7 10 9.5 10.5 9.8 12.8Z" fill="#f2a93b"/></svg></div>
<div class="a gc" style="left:318.5px;top:4.9px;color:#333">.msg</div>
<div class="a gc" style="left:549.5px;top:4.9px;width:84.0px;text-align:right;color:#333">257 KB</div>
<div class="a gc" style="left:638.5px;top:4.9px;width:61px;text-align:center;color:#333">1.0</div>
<div class="a gc" style="left:699.5px;top:4.9px;width:149.5px;text-align:center;color:#333">1.0</div>
<div class="a gc dt" style="left:849px;top:4.9px;width:189.5px;text-align:center;color:#333">11/11/2024 14:50:43</div>
<div class="a gc" style="left:1038.5px;top:4.9px;width:69.5px;text-align:center;color:#333">msg</div>
<div class="a gc" style="left:1299px;top:4.9px;color:#333">email</div>
<div class="a" style="left:0;top:29.75px;width:1483px;height:29.75px;background:#f8f8f8"></div>
<div class="a" style="left:138.5px;top:29.75px;width:411.0px;height:29.75px;background:rgba(0,0,0,0.018)"></div>
<div class="a" style="left:638.5px;top:29.75px;width:61.0px;height:29.75px;background:rgba(0,0,0,0.018)"></div>
<div class="a" style="left:849px;top:29.75px;width:189.5px;height:29.75px;background:rgba(0,0,0,0.018)"></div>
<div class="a" style="left:1108px;top:29.75px;width:186px;height:29.75px;background:rgba(0,0,0,0.018)"></div>
<div class="a" style="left:150px;top:33.8px"><svg width="16" height="20" viewBox="0 0 16 20"><defs><linearGradient id="gpptx" x1="0" y1="0" x2="0" y2="1"><stop offset="0" stop-color="#f39a1f"/><stop offset="1" stop-color="#e0701a"/></linearGradient></defs><path d="M0 0H11L16 5V20H0Z" fill="url(#gpptx)"/><path d="M11 0V5H16Z" fill="#f3d6d6" opacity="0.85"/><text x="8" y="11" font-family="Liberation Serif" font-size="11" font-weight="bold" fill="#c05a10" text-anchor="middle">P</text><text x="8" y="18.2" font-family="Liberation Sans" font-size="4.2" font-weight="bold" fill="#fff" text-anchor="middle">PPTX</text></svg></div>
<div class="a gc" style="left:176px;top:34.6px;width:371px;overflow:hidden;color:#333"><span style="letter-spacing:-0.6px">230912PORTFOLIO_COMMITTEE_ABIS_PRESENTATION_12_SEPT_2023.pptx</span></div>
<div class="a gc" style="left:549.5px;top:34.6px;width:84.0px;text-align:right;color:#333">272 KB</div>
<div class="a gc" style="left:638.5px;top:34.6px;width:61px;text-align:center;color:#333">1.2</div>
<div class="a gc" style="left:699.5px;top:34.6px;width:149.5px;text-align:center;color:#333">1.2</div>
<div class="a gc dt" style="left:849px;top:34.6px;width:189.5px;text-align:center;color:#333">04/11/2025 17:55:55</div>
<div class="a gc" style="left:1038.5px;top:34.6px;width:69.5px;text-align:center;color:#333">pptx</div>
<div class="a" style="left:0;top:58.50px;width:1483px;height:30.75px;background:#63b7ee"></div>
<div class="a" style="left:62.5px;top:66.4px"><svg width="14" height="16" viewBox="0 0 14 16" fill="none" stroke="#fff" stroke-width="1.1"><ellipse cx="7" cy="3.3" rx="5.8" ry="2.4"/><path d="M1.2 3.3V12.4A5.8 2.4 0 0 0 12.8 12.4V3.3M1.2 7.9A5.8 2.4 0 0 0 12.8 7.9"/></svg></div>
<div class="a" style="left:150px;top:63.6px"><svg width="16" height="20" viewBox="0 0 16 20"><defs><linearGradient id="gxlsx" x1="0" y1="0" x2="0" y2="1"><stop offset="0" stop-color="#6bb43a"/><stop offset="1" stop-color="#3f9020"/></linearGradient></defs><path d="M0 0H11L16 5V20H0Z" fill="url(#gxlsx)"/><path d="M11 0V5H16Z" fill="#f3d6d6" opacity="0.85"/><text x="8" y="11" font-family="Liberation Serif" font-size="11" font-weight="bold" fill="#2f7a12" text-anchor="middle">X</text><text x="8" y="18.2" font-family="Liberation Sans" font-size="4.2" font-weight="bold" fill="#fff" text-anchor="middle">XLSX</text></svg></div>
<div class="a gc" style="left:176px;top:64.4px;width:371px;overflow:hidden;color:#fff">Accounts Vtech.xlsx</div>
<div class="a gc" style="left:549.5px;top:64.4px;width:84.0px;text-align:right;color:#fff">10 KB</div>
<div class="a gc" style="left:638.5px;top:64.4px;width:61px;text-align:center;color:#fff">1.16</div>
<div class="a gc" style="left:699.5px;top:64.4px;width:149.5px;text-align:center;color:#fff">1.15</div>
<div class="a gc dt" style="left:849px;top:64.4px;width:189.5px;text-align:center;color:#fff">21/11/2025 15:00:59</div>
<div class="a gc" style="left:1038.5px;top:64.4px;width:69.5px;text-align:center;color:#fff">xlsx</div>
<div class="a gc" style="left:1111px;top:64.4px;color:#fff">Approved</div>
<div class="a gc" style="left:1299px;top:64.4px;color:#fff">Reception</div>
<div class="a" style="left:0;top:89.25px;width:1483px;height:29.75px;background:#f8f8f8"></div>
<div class="a" style="left:138.5px;top:89.25px;width:411.0px;height:29.75px;background:rgba(0,0,0,0.018)"></div>
<div class="a" style="left:638.5px;top:89.25px;width:61.0px;height:29.75px;background:rgba(0,0,0,0.018)"></div>
<div class="a" style="left:849px;top:89.25px;width:189.5px;height:29.75px;background:rgba(0,0,0,0.018)"></div>
<div class="a" style="left:1108px;top:89.25px;width:186px;height:29.75px;background:rgba(0,0,0,0.018)"></div>
<div class="a" style="left:49.5px;top:96.1px"><svg width="16" height="16" viewBox="0 0 16 16" fill="none" stroke="#333" stroke-width="1.1" stroke-linejoin="round"><path d="M7 2.3H3.2A1.6 1.6 0 0 0 1.6 3.9V12.8A1.6 1.6 0 0 0 3.2 14.4H12A1.6 1.6 0 0 0 13.6 12.8V9"/><path d="M12.6 1.3A1.3 1.3 0 0 1 14.6 3.3L8 9.9L5.6 10.5L6.2 8.1Z"/></svg></div>
<div class="a" style="left:69.5px;top:96.1px"><svg width="20" height="16" viewBox="0 -1 20 16" fill="none" stroke="#333" stroke-width="1.1"><rect x="0.5" y="4.9" width="10.4" height="5.2" rx="2.6" transform="rotate(-45 5.7 7.5)"/><rect x="7.6" y="2.9" width="10.4" height="5.2" rx="2.6" transform="rotate(-45 12.8 5.5)"/></svg></div>
<div class="a" style="left:150px;top:93.3px"><svg width="16" height="20" viewBox="0 0 16 20"><defs><linearGradient id="gpdf" x1="0" y1="0" x2="0" y2="1"><stop offset="0" stop-color="#c9222a"/><stop offset="1" stop-color="#9c1118"/></linearGradient></defs><path d="M0 0H11L16 5V20H0Z" fill="url(#gpdf)"/><path d="M11 0V5H16Z" fill="#f3d6d6" opacity="0.85"/><path d="M5 4Q7 9 4 13M7 4Q9 10 13 11" stroke="#7a0a10" stroke-width="0.6" fill="none"/><text x="8" y="18.2" font-family="Liberation Sans" font-size="5.2" font-weight="bold" fill="#fff" text-anchor="middle">PDF</text></svg></div>
<div class="a gc" style="left:176px;top:94.1px;width:371px;overflow:hidden;color:#333">Ai File-updated-cover06.pdf</div>
<div class="a gc" style="left:549.5px;top:94.1px;width:84.0px;text-align:right;color:#333">2,818 KB</div>
<div class="a gc" style="left:638.5px;top:94.1px;width:61px;text-align:center;color:#333">1.4</div>
<div class="a gc" style="left:699.5px;top:94.1px;width:149.5px;text-align:center;color:#333">1.0</div>
<div class="a gc dt" style="left:849px;top:94.1px;width:189.5px;text-align:center;color:#333">28/10/2024 12:08:31</div>
<div class="a gc" style="left:1038.5px;top:94.1px;width:69.5px;text-align:center;color:#333">pdf</div>
<div class="a" style="left:0;top:119.00px;width:1483px;height:29.75px;background:#fff"></div>
<div class="a" style="left:138.5px;top:119.00px;width:411.0px;height:29.75px;background:rgba(0,0,0,0.018)"></div>
<div class="a" style="left:638.5px;top:119.00px;width:61.0px;height:29.75px;background:rgba(0,0,0,0.018)"></div>
<div class="a" style="left:849px;top:119.00px;width:189.5px;height:29.75px;background:rgba(0,0,0,0.018)"></div>
<div class="a" style="left:1108px;top:119.00px;width:186px;height:29.75px;background:rgba(0,0,0,0.018)"></div>
<div class="a" style="left:49.5px;top:125.9px"><svg width="16" height="16" viewBox="0 0 16 16" fill="none" stroke="#333" stroke-width="1.1" stroke-linejoin="round"><path d="M7 2.3H3.2A1.6 1.6 0 0 0 1.6 3.9V12.8A1.6 1.6 0 0 0 3.2 14.4H12A1.6 1.6 0 0 0 13.6 12.8V9"/><path d="M12.6 1.3A1.3 1.3 0 0 1 14.6 3.3L8 9.9L5.6 10.5L6.2 8.1Z"/></svg></div>
<div class="a" style="left:69.5px;top:125.9px"><svg width="20" height="16" viewBox="0 -1 20 16" fill="none" stroke="#333" stroke-width="1.1"><rect x="0.5" y="4.9" width="10.4" height="5.2" rx="2.6" transform="rotate(-45 5.7 7.5)"/><rect x="7.6" y="2.9" width="10.4" height="5.2" rx="2.6" transform="rotate(-45 12.8 5.5)"/></svg></div>
<div class="a" style="left:150px;top:123.1px"><svg width="16" height="20" viewBox="0 0 16 20"><defs><linearGradient id="gpptx" x1="0" y1="0" x2="0" y2="1"><stop offset="0" stop-color="#f39a1f"/><stop offset="1" stop-color="#e0701a"/></linearGradient></defs><path d="M0 0H11L16 5V20H0Z" fill="url(#gpptx)"/><path d="M11 0V5H16Z" fill="#f3d6d6" opacity="0.85"/><text x="8" y="11" font-family="Liberation Serif" font-size="11" font-weight="bold" fill="#c05a10" text-anchor="middle">P</text><text x="8" y="18.2" font-family="Liberation Sans" font-size="4.2" font-weight="bold" fill="#fff" text-anchor="middle">PPTX</text></svg></div>
<div class="a gc" style="left:176px;top:123.9px;width:371px;overflow:hidden;color:#333"><span style="letter-spacing:0.15px">Apolitical._Online_Workshop._How_to_Get_Beyond_Politics.pptx</span></div>
<div class="a gc" style="left:549.5px;top:123.9px;width:84.0px;text-align:right;color:#333">1,125 KB</div>
<div class="a gc" style="left:638.5px;top:123.9px;width:61px;text-align:center;color:#333">1.0</div>
<div class="a gc" style="left:699.5px;top:123.9px;width:149.5px;text-align:center;color:#333">1.0</div>
<div class="a gc dt" style="left:849px;top:123.9px;width:189.5px;text-align:center;color:#333">14/10/2025 11:05:22</div>
<div class="a gc" style="left:1038.5px;top:123.9px;width:69.5px;text-align:center;color:#333">pptx</div>
<div class="a" style="left:0;top:148.75px;width:1483px;height:29.75px;background:#f8f8f8"></div>
<div class="a" style="left:138.5px;top:148.75px;width:411.0px;height:29.75px;background:rgba(0,0,0,0.018)"></div>
<div class="a" style="left:638.5px;top:148.75px;width:61.0px;height:29.75px;background:rgba(0,0,0,0.018)"></div>
<div class="a" style="left:849px;top:148.75px;width:189.5px;height:29.75px;background:rgba(0,0,0,0.018)"></div>
<div class="a" style="left:1108px;top:148.75px;width:186px;height:29.75px;background:rgba(0,0,0,0.018)"></div>
<div class="a" style="left:42.5px;top:155.6px"><svg width="14" height="16" viewBox="0 0 14 16" fill="none" stroke="#333" stroke-width="1.1"><ellipse cx="7" cy="3.3" rx="5.8" ry="2.4"/><path d="M1.2 3.3V12.4A5.8 2.4 0 0 0 12.8 12.4V3.3M1.2 7.9A5.8 2.4 0 0 0 12.8 7.9"/></svg></div>
<div class="a" style="left:60.5px;top:155.6px"><svg width="12" height="16" viewBox="0 0 12 16" fill="none" stroke="#333" stroke-width="1.1"><path d="M6 1.2C6 1.2 1.4 7 1.4 10.2A4.6 4.6 0 0 0 10.6 10.2C10.6 7 6 1.2 6 1.2Z"/><path d="M3.6 10.8A2.4 2.4 0 0 0 5 12.6" stroke-width="0.8"/></svg></div>
<div class="a" style="left:76.5px;top:155.6px"><svg width="20" height="16" viewBox="0 -1 20 16" fill="none" stroke="#333" stroke-width="1.1"><rect x="0.5" y="4.9" width="10.4" height="5.2" rx="2.6" transform="rotate(-45 5.7 7.5)"/><rect x="7.6" y="2.9" width="10.4" height="5.2" rx="2.6" transform="rotate(-45 12.8 5.5)"/></svg></div>
<div class="a" style="left:150px;top:152.8px"><svg width="16" height="20" viewBox="0 0 16 20"><defs><linearGradient id="gpdf" x1="0" y1="0" x2="0" y2="1"><stop offset="0" stop-color="#c9222a"/><stop offset="1" stop-color="#9c1118"/></linearGradient></defs><path d="M0 0H11L16 5V20H0Z" fill="url(#gpdf)"/><path d="M11 0V5H16Z" fill="#f3d6d6" opacity="0.85"/><path d="M5 4Q7 9 4 13M7 4Q9 10 13 11" stroke="#7a0a10" stroke-width="0.6" fill="none"/><text x="8" y="18.2" font-family="Liberation Sans" font-size="5.2" font-weight="bold" fill="#fff" text-anchor="middle">PDF</text></svg></div>
<div class="a gc" style="left:176px;top:153.6px;width:371px;overflow:hidden;color:#333">blank car loan.pdf</div>
<div class="a gc" style="left:549.5px;top:153.6px;width:84.0px;text-align:right;color:#333">35 KB</div>
<div class="a gc" style="left:638.5px;top:153.6px;width:61px;text-align:center;color:#333">1.3</div>
<div class="a gc" style="left:699.5px;top:153.6px;width:149.5px;text-align:center;color:#333">1.3</div>
<div class="a gc dt" style="left:849px;top:153.6px;width:189.5px;text-align:center;color:#333">21/11/2025 15:14:35</div>
<div class="a gc" style="left:1038.5px;top:153.6px;width:69.5px;text-align:center;color:#333">pdf</div>
<div class="a gc" style="left:1111px;top:153.6px;color:#333">Approved</div>
<div class="a" style="left:0;top:178.50px;width:1483px;height:29.75px;background:#fff"></div>
<div class="a" style="left:138.5px;top:178.50px;width:411.0px;height:29.75px;background:rgba(0,0,0,0.018)"></div>
<div class="a" style="left:638.5px;top:178.50px;width:61.0px;height:29.75px;background:rgba(0,0,0,0.018)"></div>
<div class="a" style="left:849px;top:178.50px;width:189.5px;height:29.75px;background:rgba(0,0,0,0.018)"></div>
<div class="a" style="left:1108px;top:178.50px;width:186px;height:29.75px;background:rgba(0,0,0,0.018)"></div>
<div class="a" style="left:50.5px;top:185.4px"><svg width="14" height="16" viewBox="0 0 14 16" fill="none" stroke="#333" stroke-width="1.1"><ellipse cx="7" cy="3.3" rx="5.8" ry="2.4"/><path d="M1.2 3.3V12.4A5.8 2.4 0 0 0 12.8 12.4V3.3M1.2 7.9A5.8 2.4 0 0 0 12.8 7.9"/></svg></div>
<div class="a" style="left:68.5px;top:185.4px"><svg width="20" height="16" viewBox="0 -1 20 16" fill="none" stroke="#333" stroke-width="1.1"><rect x="0.5" y="4.9" width="10.4" height="5.2" rx="2.6" transform="rotate(-45 5.7 7.5)"/><rect x="7.6" y="2.9" width="10.4" height="5.2" rx="2.6" transform="rotate(-45 12.8 5.5)"/></svg></div>
<div class="a" style="left:150px;top:182.6px"><svg width="16" height="20" viewBox="0 0 16 20"><defs><linearGradient id="gpdf" x1="0" y1="0" x2="0" y2="1"><stop offset="0" stop-color="#c9222a"/><stop offset="1" stop-color="#9c1118"/></linearGradient></defs><path d="M0 0H11L16 5V20H0Z" fill="url(#gpdf)"/><path d="M11 0V5H16Z" fill="#f3d6d6" opacity="0.85"/><path d="M5 4Q7 9 4 13M7 4Q9 10 13 11" stroke="#7a0a10" stroke-width="0.6" fill="none"/><text x="8" y="18.2" font-family="Liberation Sans" font-size="5.2" font-weight="bold" fill="#fff" text-anchor="middle">PDF</text></svg></div>
<div class="a gc" style="left:176px;top:183.4px;width:371px;overflow:hidden;color:#333">Circolare-n-17-E-26-giugno-2023.pdf</div>
<div class="a gc" style="left:549.5px;top:183.4px;width:84.0px;text-align:right;color:#333">2,764 KB</div>
<div class="a gc" style="left:638.5px;top:183.4px;width:61px;text-align:center;color:#333">1.2</div>
<div class="a gc" style="left:699.5px;top:183.4px;width:149.5px;text-align:center;color:#333">1.0</div>
<div class="a gc dt" style="left:849px;top:183.4px;width:189.5px;text-align:center;color:#333">04/12/2025 12:41:48</div>
<div class="a gc" style="left:1038.5px;top:183.4px;width:69.5px;text-align:center;color:#333">pdf</div>
<div class="a gc" style="left:1299px;top:183.4px;color:#333">invoicePassive</div>
<div class="a" style="left:0;top:208.25px;width:1483px;height:29.75px;background:#f8f8f8"></div>
<div class="a" style="left:138.5px;top:208.25px;width:411.0px;height:29.75px;background:rgba(0,0,0,0.018)"></div>
<div class="a" style="left:638.5px;top:208.25px;width:61.0px;height:29.75px;background:rgba(0,0,0,0.018)"></div>
<div class="a" style="left:849px;top:208.25px;width:189.5px;height:29.75px;background:rgba(0,0,0,0.018)"></div>
<div class="a" style="left:1108px;top:208.25px;width:186px;height:29.75px;background:rgba(0,0,0,0.018)"></div>
<div class="a" style="left:150px;top:212.3px"><svg width="16" height="20" viewBox="0 0 16 20"><defs><linearGradient id="gpdf" x1="0" y1="0" x2="0" y2="1"><stop offset="0" stop-color="#c9222a"/><stop offset="1" stop-color="#9c1118"/></linearGradient></defs><path d="M0 0H11L16 5V20H0Z" fill="url(#gpdf)"/><path d="M11 0V5H16Z" fill="#f3d6d6" opacity="0.85"/><path d="M5 4Q7 9 4 13M7 4Q9 10 13 11" stroke="#7a0a10" stroke-width="0.6" fill="none"/><text x="8" y="18.2" font-family="Liberation Sans" font-size="5.2" font-weight="bold" fill="#fff" text-anchor="middle">PDF</text></svg></div>
<div class="a gc" style="left:176px;top:213.1px;width:371px;overflow:hidden;color:#333">Circolare-n-17-E-26-giugno-2023(1).pdf</div>
<div class="a gc" style="left:549.5px;top:213.1px;width:84.0px;text-align:right;color:#333">2,764 KB</div>
<div class="a gc" style="left:638.5px;top:213.1px;width:61px;text-align:center;color:#333">1.0</div>
<div class="a gc" style="left:699.5px;top:213.1px;width:149.5px;text-align:center;color:#333">1.0</div>
<div class="a gc dt" style="left:849px;top:213.1px;width:189.5px;text-align:center;color:#333">04/12/2025 13:11:45</div>
<div class="a gc" style="left:1038.5px;top:213.1px;width:69.5px;text-align:center;color:#333">pdf</div>
<div class="a" style="left:0;top:238.00px;width:1483px;height:29.75px;background:#fff"></div>
<div class="a" style="left:138.5px;top:238.00px;width:411.0px;height:29.75px;background:rgba(0,0,0,0.018)"></div>
<div class="a" style="left:638.5px;top:238.00px;width:61.0px;height:29.75px;background:rgba(0,0,0,0.018)"></div>
<div class="a" style="left:849px;top:238.00px;width:189.5px;height:29.75px;background:rgba(0,0,0,0.018)"></div>
<div class="a" style="left:1108px;top:238.00px;width:186px;height:29.75px;background:rgba(0,0,0,0.018)"></div>
<div class="a" style="left:150px;top:242.1px"><svg width="16" height="20" viewBox="0 0 16 20"><defs><linearGradient id="gpdf" x1="0" y1="0" x2="0" y2="1"><stop offset="0" stop-color="#c9222a"/><stop offset="1" stop-color="#9c1118"/></linearGradient></defs><path d="M0 0H11L16 5V20H0Z" fill="url(#gpdf)"/><path d="M11 0V5H16Z" fill="#f3d6d6" opacity="0.85"/><path d="M5 4Q7 9 4 13M7 4Q9 10 13 11" stroke="#7a0a10" stroke-width="0.6" fill="none"/><text x="8" y="18.2" font-family="Liberation Sans" font-size="5.2" font-weight="bold" fill="#fff" text-anchor="middle">PDF</text></svg></div>
<div class="a gc" style="left:176px;top:242.9px;width:371px;overflow:hidden;color:#333">CIRSID0000025812 (2).pdf</div>
<div class="a gc" style="left:549.5px;top:242.9px;width:84.0px;text-align:right;color:#333">269 KB</div>
<div class="a gc" style="left:638.5px;top:242.9px;width:61px;text-align:center;color:#333">1.0</div>
<div class="a gc" style="left:699.5px;top:242.9px;width:149.5px;text-align:center;color:#333">1.0</div>
<div class="a gc dt" style="left:849px;top:242.9px;width:189.5px;text-align:center;color:#333">19/12/2025 10:31:28</div>
<div class="a gc" style="left:1038.5px;top:242.9px;width:69.5px;text-align:center;color:#333">pdf</div>
<div class="a" style="left:0;top:267.75px;width:1483px;height:29.75px;background:#f8f8f8"></div>
<div class="a" style="left:138.5px;top:267.75px;width:411.0px;height:29.75px;background:rgba(0,0,0,0.018)"></div>
<div class="a" style="left:638.5px;top:267.75px;width:61.0px;height:29.75px;background:rgba(0,0,0,0.018)"></div>
<div class="a" style="left:849px;top:267.75px;width:189.5px;height:29.75px;background:rgba(0,0,0,0.018)"></div>
<div class="a" style="left:1108px;top:267.75px;width:186px;height:29.75px;background:rgba(0,0,0,0.018)"></div>
<div class="a" style="left:62.5px;top:274.6px"><svg width="14" height="16" viewBox="0 0 14 16" fill="none" stroke="#333" stroke-width="1.1"><ellipse cx="7" cy="3.3" rx="5.8" ry="2.4"/><path d="M1.2 3.3V12.4A5.8 2.4 0 0 0 12.8 12.4V3.3M1.2 7.9A5.8 2.4 0 0 0 12.8 7.9"/></svg></div>
<div class="a" style="left:150px;top:271.8px"><svg width="16" height="20" viewBox="0 0 16 20"><defs><linearGradient id="gpdf" x1="0" y1="0" x2="0" y2="1"><stop offset="0" stop-color="#c9222a"/><stop offset="1" stop-color="#9c1118"/></linearGradient></defs><path d="M0 0H11L16 5V20H0Z" fill="url(#gpdf)"/><path d="M11 0V5H16Z" fill="#f3d6d6" opacity="0.85"/><path d="M5 4Q7 9 4 13M7 4Q9 10 13 11" stroke="#7a0a10" stroke-width="0.6" fill="none"/><text x="8" y="18.2" font-family="Liberation Sans" font-size="5.2" font-weight="bold" fill="#fff" text-anchor="middle">PDF</text></svg></div>
<div class="a gc" style="left:176px;top:272.6px;width:371px;overflow:hidden;color:#333">complaint.pdf</div>
<div class="a gc" style="left:549.5px;top:272.6px;width:84.0px;text-align:right;color:#333">212 KB</div>
<div class="a gc" style="left:638.5px;top:272.6px;width:61px;text-align:center;color:#333">1.7</div>
<div class="a gc" style="left:699.5px;top:272.6px;width:149.5px;text-align:center;color:#333">1.7</div>
<div class="a gc dt" style="left:849px;top:272.6px;width:189.5px;text-align:center;color:#333">05/11/2025 14:57:20</div>
<div class="a gc" style="left:1038.5px;top:272.6px;width:69.5px;text-align:center;color:#333">pdf</div>
<div class="a gc" style="left:1111px;top:272.6px;color:#333">Approved</div>
<div class="a" style="left:1543px;top:0;width:20px;height:291px;background:#ececec"></div>
<div class="a" style="left:1543px;top:0;width:20px;height:18px;background:#e6e6e6"></div>
<svg class="a" style="left:1548px;top:7px" width="11" height="7" viewBox="0 0 11 7" fill="none" stroke="#6c6c6c" stroke-width="2"><path d="M1 6L5.5 1.5L10 6"/></svg>
<div class="a" style="left:1549px;top:22px;width:9px;height:24px;background:#777"></div>
<div class="a" style="left:1543px;top:273px;width:20px;height:18px;background:#e6e6e6"></div>
<svg class="a" style="left:1548px;top:279px" width="11" height="7" viewBox="0 0 11 7" fill="none" stroke="#6c6c6c" stroke-width="2"><path d="M1 1L5.5 5.5L10 1"/></svg>
</div><div class="a" style="left:337px;top:558px;width:1563px;height:8px;background:#e4e4e4"></div>
<div class="a" style="left:1101px;top:558px;width:36px;height:8px;background:#c8c8c8"></div>
<div class="a" style="left:1114px;top:559px;width:0;height:0;border-left:4.5px solid transparent;border-right:4.5px solid transparent;border-bottom:7px solid #666"></div>
<div class="a" style="left:337px;top:566px;width:1564px;height:435px;background:#fff;border:1px solid #c8c8c8;border-top:0"></div>
<div class="a" style="left:337px;top:566px;width:1460px;height:43px;overflow:hidden">
<div class="dtab" style="left:7px;width:130px">Properties</div>
<div class="dtab" style="left:143px;width:155px">Ext. Properties</div>
<div class="dtab" style="left:304px;width:119px">Security</div>
<div class="dtab on" style="left:429px;width:120px">Versions</div>
<div class="dtab" style="left:555px;width:118px">Preview</div>
<div class="dtab" style="left:679px;width:106px">Notes</div>
<div class="dtab" style="left:790px;width:102px">Links</div>
<div class="dtab" style="left:898px;width:111px">History</div>
<div class="dtab" style="left:1017px;width:127px">Signature</div>
<div class="dtab" style="left:1150px;width:131px">Publishing</div>
<div class="dtab" style="left:1288px;width:122px">Calendar</div>
<div class="dtab" style="left:1417px;width:152px">Subscriptions</div>
</div>
<div class="a" style="left:1797px;top:558px;width:104px;height:50px;background:#e4e4e4"></div>
<div class="a" style="left:1813px;top:579px;width:0;height:0;border-top:8px solid transparent;border-bottom:8px solid transparent;border-right:10px solid #666"></div>
<div class="a" style="left:1850px;top:579px;width:0;height:0;border-top:8px solid transparent;border-bottom:8px solid transparent;border-left:9.5px solid #666"></div>
<div class="a" style="left:1877px;top:581.5px;width:0;height:0;border-left:8px solid transparent;border-right:8px solid transparent;border-top:9.5px solid #666"></div>
<div class="a" style="left:337px;top:608px;width:1563px;height:1px;background:#a8a8a8"></div>
<div class="a" style="left:337px;top:566px;width:1460px;height:43px;overflow:hidden"><div class="dtab on" style="left:429px;width:120px">Versions</div></div>
<div class="a" style="left:345px;top:615px;width:1548px;height:329px;border:1px solid #c8c8c8;background:#fff;overflow:hidden">
<div class="a" style="left:0;top:0;width:1547px;height:35px;background:#4aa6e1"></div>
<div class="a gh" style="left:4px;top:8px">User</div>
<div class="a gh" style="left:118.5px;top:8px">Event</div>
<div class="a gh" style="left:368px;top:8px">File name</div>
<div class="a gh" style="left:630.6px;top:8px">File ve...</div>
<div class="a gh" style="left:718.4000000000001px;top:8px">Version</div>
<div class="a gh" style="left:806px;top:8px">Revision</div>
<div class="a gh" style="left:951.3px;top:8px">Date</div>
<div class="a gh" style="left:1065.3px;top:8px">Permalink</div>
<div class="a gh" style="left:1156px;top:8px">Workflow Status</div>
<div class="a gh" style="left:1343px;top:8px">Comment</div>
<div class="a" style="left:0;top:35.00px;width:1526px;height:29.75px;background:#fff"></div>
<div class="a" style="left:112.75px;top:35.00px;width:250.00px;height:29.75px;background:rgba(0,0,0,0.018)"></div>
<div class="a" style="left:625.00px;top:35.00px;width:87.75px;height:29.75px;background:rgba(0,0,0,0.018)"></div>
<div class="a" style="left:800.00px;top:35.00px;width:87.75px;height:29.75px;background:rgba(0,0,0,0.018)"></div>
<div class="a" style="left:1037.75px;top:35.00px;width:112.75px;height:29.75px;background:rgba(0,0,0,0.018)"></div>
<div class="a" style="left:1338.00px;top:35.00px;width:187.80px;height:29.75px;background:rgba(0,0,0,0.018)"></div>
<div class="a" style="left:6px;top:38.9px;width:20px;height:20px"><svg width="20" height="20" viewBox="0 0 20 20"><rect width="20" height="20" fill="#000"/><path d="M6.5 1V19M13.5 1V19M1 6.5H19M1 13.5H19" stroke="#181818" stroke-width="0.8"/><rect x="6.6" y="6.6" width="6.8" height="6.8" fill="#fff"/><circle cx="10" cy="10" r="3.4" fill="#000"/></svg></div>
<div class="a gc" style="left:32px;top:39.9px">Dejah Thoris</div>
<div class="a gc" style="left:117.39999999999998px;top:39.9px">Document metadata have been chang…</div>
<div class="a" style="left:374px;top:39.9px"><svg width="16" height="20" viewBox="0 0 16 20"><defs><linearGradient id="gxlsx" x1="0" y1="0" x2="0" y2="1"><stop offset="0" stop-color="#6bb43a"/><stop offset="1" stop-color="#3f9020"/></linearGradient></defs><path d="M0 0H11L16 5V20H0Z" fill="url(#gxlsx)"/><path d="M11 0V5H16Z" fill="#f3d6d6" opacity="0.85"/><text x="8" y="11" font-family="Liberation Serif" font-size="11" font-weight="bold" fill="#2f7a12" text-anchor="middle">X</text><text x="8" y="18.2" font-family="Liberation Sans" font-size="4.2" font-weight="bold" fill="#fff" text-anchor="middle">XLSX</text></svg></div>
<div class="a gc" style="left:400.29999999999995px;top:39.9px">Accounts Vtech.xlsx</div>
<div class="a gc" style="left:629.6px;top:39.9px">1.15</div>
<div class="a gc" style="left:717.4000000000001px;top:39.9px">1.16</div>
<div class="a gc" style="left:805px;top:39.9px">1.7</div>
<div class="a gc dt" style="left:898.7px;top:39.9px">09/12/2025 15:38:52</div>
<div class="a gc" style="left:1063.7px;top:39.9px;color:#0000ee;text-decoration:underline">Download</div>
<div class="a gc" style="left:1155px;top:39.9px">Approved</div>
<div class="a gc" style="left:1342px;top:39.9px">Office Add-in</div>
<div class="a" style="left:0;top:64.75px;width:1526px;height:29.75px;background:#f8f8f8"></div>
<div class="a" style="left:112.75px;top:64.75px;width:250.00px;height:29.75px;background:rgba(0,0,0,0.018)"></div>
<div class="a" style="left:625.00px;top:64.75px;width:87.75px;height:29.75px;background:rgba(0,0,0,0.018)"></div>
<div class="a" style="left:800.00px;top:64.75px;width:87.75px;height:29.75px;background:rgba(0,0,0,0.018)"></div>
<div class="a" style="left:1037.75px;top:64.75px;width:112.75px;height:29.75px;background:rgba(0,0,0,0.018)"></div>
<div class="a" style="left:1338.00px;top:64.75px;width:187.80px;height:29.75px;background:rgba(0,0,0,0.018)"></div>
<div class="a" style="left:6px;top:68.6px;width:20px;height:20px"><svg width="20" height="20" viewBox="0 0 20 20"><rect width="20" height="20" fill="#000"/><path d="M6.5 1V19M13.5 1V19M1 6.5H19M1 13.5H19" stroke="#181818" stroke-width="0.8"/><rect x="6.6" y="6.6" width="6.8" height="6.8" fill="#fff"/><circle cx="10" cy="10" r="3.4" fill="#000"/></svg></div>
<div class="a gc" style="left:32px;top:69.6px">Dejah Thoris</div>
<div class="a gc" style="left:117.39999999999998px;top:69.6px">The document has been checked in</div>
<div class="a" style="left:374px;top:69.6px"><svg width="16" height="20" viewBox="0 0 16 20"><defs><linearGradient id="gxlsx" x1="0" y1="0" x2="0" y2="1"><stop offset="0" stop-color="#6bb43a"/><stop offset="1" stop-color="#3f9020"/></linearGradient></defs><path d="M0 0H11L16 5V20H0Z" fill="url(#gxlsx)"/><path d="M11 0V5H16Z" fill="#f3d6d6" opacity="0.85"/><text x="8" y="11" font-family="Liberation Serif" font-size="11" font-weight="bold" fill="#2f7a12" text-anchor="middle">X</text><text x="8" y="18.2" font-family="Liberation Sans" font-size="4.2" font-weight="bold" fill="#fff" text-anchor="middle">XLSX</text></svg></div>
<div class="a gc" style="left:400.29999999999995px;top:69.6px">Accounts Vtech.xlsx</div>
<div class="a gc" style="left:629.6px;top:69.6px">1.15</div>
<div class="a gc" style="left:717.4000000000001px;top:69.6px">1.15</div>
<div class="a gc" style="left:805px;top:69.6px">1.7</div>
<div class="a gc dt" style="left:898.7px;top:69.6px">21/11/2025 15:00:59</div>
<div class="a gc" style="left:1063.7px;top:69.6px;color:#0000ee;text-decoration:underline">Download</div>
<div class="a gc" style="left:1155px;top:69.6px">Approved</div>
<div class="a gc" style="left:1342px;top:69.6px">Office Add-in</div>
<div class="a" style="left:0;top:94.50px;width:1526px;height:29.75px;background:#fff"></div>
<div class="a" style="left:112.75px;top:94.50px;width:250.00px;height:29.75px;background:rgba(0,0,0,0.018)"></div>
<div class="a" style="left:625.00px;top:94.50px;width:87.75px;height:29.75px;background:rgba(0,0,0,0.018)"></div>
<div class="a" style="left:800.00px;top:94.50px;width:87.75px;height:29.75px;background:rgba(0,0,0,0.018)"></div>
<div class="a" style="left:1037.75px;top:94.50px;width:112.75px;height:29.75px;background:rgba(0,0,0,0.018)"></div>
<div class="a" style="left:1338.00px;top:94.50px;width:187.80px;height:29.75px;background:rgba(0,0,0,0.018)"></div>
<div class="a" style="left:6px;top:98.4px;width:20px;height:20px"><svg width="20" height="20" viewBox="0 0 20 20"><rect width="20" height="20" fill="#000"/><path d="M6.5 1V19M13.5 1V19M1 6.5H19M1 13.5H19" stroke="#181818" stroke-width="0.8"/><rect x="6.6" y="6.6" width="6.8" height="6.8" fill="#fff"/><circle cx="10" cy="10" r="3.4" fill="#000"/></svg></div>
<div class="a gc" style="left:32px;top:99.4px">Dejah Thoris</div>
<div class="a gc" style="left:117.39999999999998px;top:99.4px">The document has been checked in</div>
<div class="a" style="left:374px;top:99.4px"><svg width="16" height="20" viewBox="0 0 16 20"><defs><linearGradient id="gxlsx" x1="0" y1="0" x2="0" y2="1"><stop offset="0" stop-color="#6bb43a"/><stop offset="1" stop-color="#3f9020"/></linearGradient></defs><path d="M0 0H11L16 5V20H0Z" fill="url(#gxlsx)"/><path d="M11 0V5H16Z" fill="#f3d6d6" opacity="0.85"/><text x="8" y="11" font-family="Liberation Serif" font-size="11" font-weight="bold" fill="#2f7a12" text-anchor="middle">X</text><text x="8" y="18.2" font-family="Liberation Sans" font-size="4.2" font-weight="bold" fill="#fff" text-anchor="middle">XLSX</text></svg></div>
<div class="a gc" style="left:400.29999999999995px;top:99.4px">Accounts Vtech.xlsx</div>
<div class="a gc" style="left:629.6px;top:99.4px">1.14</div>
<div class="a gc" style="left:717.4000000000001px;top:99.4px">1.14</div>
<div class="a gc" style="left:805px;top:99.4px">1.7</div>
<div class="a gc dt" style="left:898.7px;top:99.4px">10/11/2025 12:45:54</div>
<div class="a gc" style="left:1063.7px;top:99.4px;color:#0000ee;text-decoration:underline">Download</div>
<div class="a gc" style="left:1155px;top:99.4px">Approved</div>
<div class="a gc" style="left:1342px;top:99.4px">Office Add-in</div>
<div class="a" style="left:0;top:124.25px;width:1526px;height:29.75px;background:#f8f8f8"></div>
<div class="a" style="left:112.75px;top:124.25px;width:250.00px;height:29.75px;background:rgba(0,0,0,0.018)"></div>
<div class="a" style="left:625.00px;top:124.25px;width:87.75px;height:29.75px;background:rgba(0,0,0,0.018)"></div>
<div class="a" style="left:800.00px;top:124.25px;width:87.75px;height:29.75px;background:rgba(0,0,0,0.018)"></div>
<div class="a" style="left:1037.75px;top:124.25px;width:112.75px;height:29.75px;background:rgba(0,0,0,0.018)"></div>
<div class="a" style="left:1338.00px;top:124.25px;width:187.80px;height:29.75px;background:rgba(0,0,0,0.018)"></div>
<div class="a" style="left:6px;top:128.1px;width:20px;height:20px"><svg width="20" height="20" viewBox="0 0 20 20"><rect width="20" height="20" fill="#000"/><path d="M6.5 1V19M13.5 1V19M1 6.5H19M1 13.5H19" stroke="#181818" stroke-width="0.8"/><rect x="6.6" y="6.6" width="6.8" height="6.8" fill="#fff"/><circle cx="10" cy="10" r="3.4" fill="#000"/></svg></div>
<div class="a gc" style="left:32px;top:129.1px">Dejah Thoris</div>
<div class="a gc" style="left:117.39999999999998px;top:129.1px">Document metadata have been chang…</div>
<div class="a" style="left:374px;top:129.1px"><svg width="16" height="20" viewBox="0 0 16 20"><defs><linearGradient id="gxlsx" x1="0" y1="0" x2="0" y2="1"><stop offset="0" stop-color="#6bb43a"/><stop offset="1" stop-color="#3f9020"/></linearGradient></defs><path d="M0 0H11L16 5V20H0Z" fill="url(#gxlsx)"/><path d="M11 0V5H16Z" fill="#f3d6d6" opacity="0.85"/><text x="8" y="11" font-family="Liberation Serif" font-size="11" font-weight="bold" fill="#2f7a12" text-anchor="middle">X</text><text x="8" y="18.2" font-family="Liberation Sans" font-size="4.2" font-weight="bold" fill="#fff" text-anchor="middle">XLSX</text></svg></div>
<div class="a gc" style="left:400.29999999999995px;top:129.1px">Accounts Vtech.xlsx</div>
<div class="a gc" style="left:629.6px;top:129.1px">1.11</div>
<div class="a gc" style="left:717.4000000000001px;top:129.1px">1.13</div>
<div class="a gc" style="left:805px;top:129.1px">1.7</div>
<div class="a gc dt" style="left:898.7px;top:129.1px">05/11/2025 16:39:35</div>
<div class="a gc" style="left:1063.7px;top:129.1px;color:#0000ee;text-decoration:underline">Download</div>
<div class="a gc" style="left:1155px;top:129.1px">Approved</div>
<div class="a gc" style="left:1342px;top:129.1px">checked-in by onlyoffice</div>
<div class="a" style="left:0;top:154.00px;width:1526px;height:29.75px;background:#fff"></div>
<div class="a" style="left:112.75px;top:154.00px;width:250.00px;height:29.75px;background:rgba(0,0,0,0.018)"></div>
<div class="a" style="left:625.00px;top:154.00px;width:87.75px;height:29.75px;background:rgba(0,0,0,0.018)"></div>
<div class="a" style="left:800.00px;top:154.00px;width:87.75px;height:29.75px;background:rgba(0,0,0,0.018)"></div>
<div class="a" style="left:1037.75px;top:154.00px;width:112.75px;height:29.75px;background:rgba(0,0,0,0.018)"></div>
<div class="a" style="left:1338.00px;top:154.00px;width:187.80px;height:29.75px;background:rgba(0,0,0,0.018)"></div>
<div class="a" style="left:6px;top:157.9px;width:20px;height:20px"><svg width="20" height="20" viewBox="0 0 20 20"><rect width="20" height="20" fill="#000"/><path d="M6.5 1V19M13.5 1V19M1 6.5H19M1 13.5H19" stroke="#181818" stroke-width="0.8"/><rect x="6.6" y="6.6" width="6.8" height="6.8" fill="#fff"/><circle cx="10" cy="10" r="3.4" fill="#000"/></svg></div>
<div class="a gc" style="left:32px;top:158.9px">Dejah Thoris</div>
<div class="a gc" style="left:117.39999999999998px;top:158.9px">Document metadata have been chang…</div>
<div class="a" style="left:374px;top:158.9px"><svg width="16" height="20" viewBox="0 0 16 20"><defs><linearGradient id="gxlsx" x1="0" y1="0" x2="0" y2="1"><stop offset="0" stop-color="#6bb43a"/><stop offset="1" stop-color="#3f9020"/></linearGradient></defs><path d="M0 0H11L16 5V20H0Z" fill="url(#gxlsx)"/><path d="M11 0V5H16Z" fill="#f3d6d6" opacity="0.85"/><text x="8" y="11" font-family="Liberation Serif" font-size="11" font-weight="bold" fill="#2f7a12" text-anchor="middle">X</text><text x="8" y="18.2" font-family="Liberation Sans" font-size="4.2" font-weight="bold" fill="#fff" text-anchor="middle">XLSX</text></svg></div>
<div class="a gc" style="left:400.29999999999995px;top:158.9px">Accounts.xlsx</div>
<div class="a gc" style="left:629.6px;top:158.9px">1.11</div>
<div class="a gc" style="left:717.4000000000001px;top:158.9px">1.12</div>
<div class="a gc" style="left:805px;top:158.9px">1.7</div>
<div class="a gc dt" style="left:898.7px;top:158.9px">05/11/2025 16:12:45</div>
<div class="a gc" style="left:1063.7px;top:158.9px;color:#0000ee;text-decoration:underline">Download</div>
<div class="a gc" style="left:1155px;top:158.9px">Approved</div>
<div class="a gc" style="left:1342px;top:158.9px">checked-in by onlyoffice</div>
<div class="a" style="left:0;top:183.75px;width:1526px;height:29.75px;background:#f8f8f8"></div>
<div class="a" style="left:112.75px;top:183.75px;width:250.00px;height:29.75px;background:rgba(0,0,0,0.018)"></div>
<div class="a" style="left:625.00px;top:183.75px;width:87.75px;height:29.75px;background:rgba(0,0,0,0.018)"></div>
<div class="a" style="left:800.00px;top:183.75px;width:87.75px;height:29.75px;background:rgba(0,0,0,0.018)"></div>
<div class="a" style="left:1037.75px;top:183.75px;width:112.75px;height:29.75px;background:rgba(0,0,0,0.018)"></div>
<div class="a" style="left:1338.00px;top:183.75px;width:187.80px;height:29.75px;background:rgba(0,0,0,0.018)"></div>
<div class="a" style="left:6px;top:187.6px;width:20px;height:20px"><svg width="20" height="20" viewBox="0 0 20 20"><rect width="20" height="20" fill="#000"/><path d="M6.5 1V19M13.5 1V19M1 6.5H19M1 13.5H19" stroke="#181818" stroke-width="0.8"/><rect x="6.6" y="6.6" width="6.8" height="6.8" fill="#fff"/><circle cx="10" cy="10" r="3.4" fill="#000"/></svg></div>
<div class="a gc" style="left:32px;top:188.6px">Dejah Thoris</div>
<div class="a gc" style="left:117.39999999999998px;top:188.6px">The document has been checked in</div>
<div class="a" style="left:374px;top:188.6px"><svg width="16" height="20" viewBox="0 0 16 20"><defs><linearGradient id="gxlsx" x1="0" y1="0" x2="0" y2="1"><stop offset="0" stop-color="#6bb43a"/><stop offset="1" stop-color="#3f9020"/></linearGradient></defs><path d="M0 0H11L16 5V20H0Z" fill="url(#gxlsx)"/><path d="M11 0V5H16Z" fill="#f3d6d6" opacity="0.85"/><text x="8" y="11" font-family="Liberation Serif" font-size="11" font-weight="bold" fill="#2f7a12" text-anchor="middle">X</text><text x="8" y="18.2" font-family="Liberation Sans" font-size="4.2" font-weight="bold" fill="#fff" text-anchor="middle">XLSX</text></svg></div>
<div class="a gc" style="left:400.29999999999995px;top:188.6px">Accounts.xlsx</div>
<div class="a gc" style="left:629.6px;top:188.6px">1.11</div>
<div class="a gc" style="left:717.4000000000001px;top:188.6px">1.11</div>
<div class="a gc" style="left:805px;top:188.6px">1.7</div>
<div class="a gc dt" style="left:898.7px;top:188.6px">04/11/2025 18:32:17</div>
<div class="a gc" style="left:1063.7px;top:188.6px;color:#0000ee;text-decoration:underline">Download</div>
<div class="a gc" style="left:1155px;top:188.6px">Approved</div>
<div class="a gc" style="left:1342px;top:188.6px">checked-in by onlyoffice</div>
<div class="a" style="left:0;top:213.50px;width:1526px;height:29.75px;background:#fff"></div>
<div class="a" style="left:112.75px;top:213.50px;width:250.00px;height:29.75px;background:rgba(0,0,0,0.018)"></div>
<div class="a" style="left:625.00px;top:213.50px;width:87.75px;height:29.75px;background:rgba(0,0,0,0.018)"></div>
<div class="a" style="left:800.00px;top:213.50px;width:87.75px;height:29.75px;background:rgba(0,0,0,0.018)"></div>
<div class="a" style="left:1037.75px;top:213.50px;width:112.75px;height:29.75px;background:rgba(0,0,0,0.018)"></div>
<div class="a" style="left:1338.00px;top:213.50px;width:187.80px;height:29.75px;background:rgba(0,0,0,0.018)"></div>
<div class="a" style="left:6px;top:217.4px;width:20px;height:20px"><svg width="20" height="20" viewBox="0 0 20 20"><rect width="20" height="20" fill="#000"/><path d="M6.5 1V19M13.5 1V19M1 6.5H19M1 13.5H19" stroke="#181818" stroke-width="0.8"/><rect x="6.6" y="6.6" width="6.8" height="6.8" fill="#fff"/><circle cx="10" cy="10" r="3.4" fill="#000"/></svg></div>
<div class="a gc" style="left:32px;top:218.4px">Dejah Thoris</div>
<div class="a gc" style="left:117.39999999999998px;top:218.4px">The document has been checked in</div>
<div class="a" style="left:374px;top:218.4px"><svg width="16" height="20" viewBox="0 0 16 20"><defs><linearGradient id="gxlsx" x1="0" y1="0" x2="0" y2="1"><stop offset="0" stop-color="#6bb43a"/><stop offset="1" stop-color="#3f9020"/></linearGradient></defs><path d="M0 0H11L16 5V20H0Z" fill="url(#gxlsx)"/><path d="M11 0V5H16Z" fill="#f3d6d6" opacity="0.85"/><text x="8" y="11" font-family="Liberation Serif" font-size="11" font-weight="bold" fill="#2f7a12" text-anchor="middle">X</text><text x="8" y="18.2" font-family="Liberation Sans" font-size="4.2" font-weight="bold" fill="#fff" text-anchor="middle">XLSX</text></svg></div>
<div class="a gc" style="left:400.29999999999995px;top:218.4px">Accounts.xlsx</div>
<div class="a gc" style="left:629.6px;top:218.4px">1.10</div>
<div class="a gc" style="left:717.4000000000001px;top:218.4px">1.10</div>
<div class="a gc" style="left:805px;top:218.4px">1.7</div>
<div class="a gc dt" style="left:898.7px;top:218.4px">04/11/2025 18:31:45</div>
<div class="a gc" style="left:1063.7px;top:218.4px;color:#0000ee;text-decoration:underline">Download</div>
<div class="a gc" style="left:1155px;top:218.4px">Approved</div>
<div class="a gc" style="left:1342px;top:218.4px">checked-in by onlyoffice</div>
<div class="a" style="left:0;top:243.25px;width:1526px;height:29.75px;background:#f8f8f8"></div>
<div class="a" style="left:112.75px;top:243.25px;width:250.00px;height:29.75px;background:rgba(0,0,0,0.018)"></div>
<div class="a" style="left:625.00px;top:243.25px;width:87.75px;height:29.75px;background:rgba(0,0,0,0.018)"></div>
<div class="a" style="left:800.00px;top:243.25px;width:87.75px;height:29.75px;background:rgba(0,0,0,0.018)"></div>
<div class="a" style="left:1037.75px;top:243.25px;width:112.75px;height:29.75px;background:rgba(0,0,0,0.018)"></div>
<div class="a" style="left:1338.00px;top:243.25px;width:187.80px;height:29.75px;background:rgba(0,0,0,0.018)"></div>
<div class="a" style="left:6px;top:247.1px;width:20px;height:20px"><svg width="20" height="20" viewBox="0 0 20 20"><rect width="20" height="20" fill="#000"/><path d="M6.5 1V19M13.5 1V19M1 6.5H19M1 13.5H19" stroke="#181818" stroke-width="0.8"/><rect x="6.6" y="6.6" width="6.8" height="6.8" fill="#fff"/><circle cx="10" cy="10" r="3.4" fill="#000"/></svg></div>
<div class="a gc" style="left:32px;top:248.1px">Dejah Thoris</div>
<div class="a gc" style="left:117.39999999999998px;top:248.1px">The document has been checked in</div>
<div class="a" style="left:374px;top:248.1px"><svg width="16" height="20" viewBox="0 0 16 20"><defs><linearGradient id="gxlsx" x1="0" y1="0" x2="0" y2="1"><stop offset="0" stop-color="#6bb43a"/><stop offset="1" stop-color="#3f9020"/></linearGradient></defs><path d="M0 0H11L16 5V20H0Z" fill="url(#gxlsx)"/><path d="M11 0V5H16Z" fill="#f3d6d6" opacity="0.85"/><text x="8" y="11" font-family="Liberation Serif" font-size="11" font-weight="bold" fill="#2f7a12" text-anchor="middle">X</text><text x="8" y="18.2" font-family="Liberation Sans" font-size="4.2" font-weight="bold" fill="#fff" text-anchor="middle">XLSX</text></svg></div>
<div class="a gc" style="left:400.29999999999995px;top:248.1px">Accounts.xlsx</div>
<div class="a gc" style="left:629.6px;top:248.1px">1.9</div>
<div class="a gc" style="left:717.4000000000001px;top:248.1px">1.9</div>
<div class="a gc" style="left:805px;top:248.1px">1.7</div>
<div class="a gc dt" style="left:898.7px;top:248.1px">04/11/2025 17:08:04</div>
<div class="a gc" style="left:1063.7px;top:248.1px;color:#0000ee;text-decoration:underline">Download</div>
<div class="a gc" style="left:1155px;top:248.1px">Approved</div>
<div class="a gc" style="left:1342px;top:248.1px">checked-in by onlyoffice</div>
<div class="a" style="left:0;top:273.00px;width:1526px;height:29.75px;background:#fff"></div>
<div class="a" style="left:112.75px;top:273.00px;width:250.00px;height:29.75px;background:rgba(0,0,0,0.018)"></div>
<div class="a" style="left:625.00px;top:273.00px;width:87.75px;height:29.75px;background:rgba(0,0,0,0.018)"></div>
<div class="a" style="left:800.00px;top:273.00px;width:87.75px;height:29.75px;background:rgba(0,0,0,0.018)"></div>
<div class="a" style="left:1037.75px;top:273.00px;width:112.75px;height:29.75px;background:rgba(0,0,0,0.018)"></div>
<div class="a" style="left:1338.00px;top:273.00px;width:187.80px;height:29.75px;background:rgba(0,0,0,0.018)"></div>
<div class="a" style="left:6px;top:276.9px;width:20px;height:20px"><svg width="20" height="20" viewBox="0 0 20 20"><rect width="20" height="20" fill="#000"/><path d="M6.5 1V19M13.5 1V19M1 6.5H19M1 13.5H19" stroke="#181818" stroke-width="0.8"/><rect x="6.6" y="6.6" width="6.8" height="6.8" fill="#fff"/><circle cx="10" cy="10" r="3.4" fill="#000"/></svg></div>
<div class="a gc" style="left:32px;top:277.9px">Dejah Thoris</div>
<div class="a gc" style="left:117.39999999999998px;top:277.9px">Document metadata have been chang…</div>
<div class="a" style="left:374px;top:277.9px"><svg width="16" height="20" viewBox="0 0 16 20"><defs><linearGradient id="gxls" x1="0" y1="0" x2="0" y2="1"><stop offset="0" stop-color="#6bb43a"/><stop offset="1" stop-color="#3f9020"/></linearGradient></defs><path d="M0 0H11L16 5V20H0Z" fill="url(#gxls)"/><path d="M11 0V5H16Z" fill="#f3d6d6" opacity="0.85"/><text x="8" y="11" font-family="Liberation Serif" font-size="11" font-weight="bold" fill="#2f7a12" text-anchor="middle">X</text><text x="8" y="18.2" font-family="Liberation Sans" font-size="5.2" font-weight="bold" fill="#fff" text-anchor="middle">XLS</text></svg></div>
<div class="a gc" style="left:400.29999999999995px;top:277.9px">Accounts.xls</div>
<div class="a gc" style="left:629.6px;top:277.9px">1.7</div>
<div class="a gc" style="left:717.4000000000001px;top:277.9px">1.8</div>
<div class="a gc" style="left:805px;top:277.9px">1.7</div>
<div class="a gc dt" style="left:898.7px;top:277.9px">14/10/2025 10:30:34</div>
<div class="a gc" style="left:1063.7px;top:277.9px;color:#0000ee;text-decoration:underline">Download</div>
<div class="a gc" style="left:1155px;top:277.9px">Approved</div>
<div class="a gc" style="left:1342px;top:277.9px">Office Add-in</div>
<div class="a" style="left:0;top:302.75px;width:1526px;height:29.75px;background:#f8f8f8"></div>
<div class="a" style="left:112.75px;top:302.75px;width:250.00px;height:29.75px;background:rgba(0,0,0,0.018)"></div>
<div class="a" style="left:625.00px;top:302.75px;width:87.75px;height:29.75px;background:rgba(0,0,0,0.018)"></div>
<div class="a" style="left:800.00px;top:302.75px;width:87.75px;height:29.75px;background:rgba(0,0,0,0.018)"></div>
<div class="a" style="left:1037.75px;top:302.75px;width:112.75px;height:29.75px;background:rgba(0,0,0,0.018)"></div>
<div class="a" style="left:1338.00px;top:302.75px;width:187.80px;height:29.75px;background:rgba(0,0,0,0.018)"></div>
<div class="a" style="left:6px;top:306.6px;width:20px;height:20px"><svg width="20" height="20" viewBox="0 0 20 20"><rect width="20" height="20" fill="#000"/><path d="M6.5 1V19M13.5 1V19M1 6.5H19M1 13.5H19" stroke="#181818" stroke-width="0.8"/><rect x="6.6" y="6.6" width="6.8" height="6.8" fill="#fff"/><circle cx="10" cy="10" r="3.4" fill="#000"/></svg></div>
<div class="a gc" style="left:32px;top:307.6px">Dejah Thoris</div>
<div class="a gc" style="left:117.39999999999998px;top:307.6px">The document has been checked in</div>
<div class="a" style="left:374px;top:307.6px"><svg width="16" height="20" viewBox="0 0 16 20"><defs><linearGradient id="gxls" x1="0" y1="0" x2="0" y2="1"><stop offset="0" stop-color="#6bb43a"/><stop offset="1" stop-color="#3f9020"/></linearGradient></defs><path d="M0 0H11L16 5V20H0Z" fill="url(#gxls)"/><path d="M11 0V5H16Z" fill="#f3d6d6" opacity="0.85"/><text x="8" y="11" font-family="Liberation Serif" font-size="11" font-weight="bold" fill="#2f7a12" text-anchor="middle">X</text><text x="8" y="18.2" font-family="Liberation Sans" font-size="5.2" font-weight="bold" fill="#fff" text-anchor="middle">XLS</text></svg></div>
<div class="a gc" style="left:400.29999999999995px;top:307.6px">Conti.xls</div>
<div class="a gc" style="left:629.6px;top:307.6px">1.7</div>
<div class="a gc" style="left:717.4000000000001px;top:307.6px">1.7</div>
<div class="a gc" style="left:805px;top:307.6px">null</div>
<div class="a gc dt" style="left:898.7px;top:307.6px">06/08/2025 15:17:37</div>
<div class="a gc" style="left:1063.7px;top:307.6px;color:#0000ee;text-decoration:underline">Download</div>
<div class="a gc" style="left:1155px;top:307.6px">Approved</div>
<div class="a gc" style="left:1342px;top:307.6px">Office Add-in</div>
<div class="a" style="left:1526px;top:35px;width:20px;height:293px;background:#ececec"></div>
<div class="a" style="left:1526px;top:35px;width:20px;height:18px;background:#e6e6e6"></div>
<svg class="a" style="left:1531px;top:40px" width="11" height="7" viewBox="0 0 11 7" fill="none" stroke="#6c6c6c" stroke-width="2"><path d="M1 6L5.5 1.5L10 6"/></svg>
<div class="a" style="left:1532px;top:57px;width:9px;height:143px;background:#777"></div>
<div class="a" style="left:1526px;top:309px;width:20px;height:18px;background:#e6e6e6"></div>
<svg class="a" style="left:1531px;top:314px" width="11" height="7" viewBox="0 0 11 7" fill="none" stroke="#6c6c6c" stroke-width="2"><path d="M1 1L5.5 5.5L10 1"/></svg>
</div>
<div class="panel" style="left:345px;top:949px;width:1548px;height:44px"></div>
<div class="a lbl" style="left:355.6px;top:959.5px">Display :</div>
<div class="a inp" style="left:415px;top:957px;width:82px">100</div><div class="a" style="left:483px;top:961.5px;width:0;height:0;border-left:5.5px solid transparent;border-right:5.5px solid transparent;border-bottom:5px solid #1a7fd0"></div><div class="a" style="left:483px;top:972.8px;width:0;height:0;border-left:5.5px solid transparent;border-right:5.5px solid transparent;border-top:5px solid #1a7fd0"></div>
<div class="a lbl" style="left:501px;top:959.5px;color:#888">elements</div>
<div class="a lbl" style="left:612px;top:959.5px;color:#333">Export</div>
<div class="a lbl" style="left:666px;top:959.5px;color:#333">Print</div>
<svg class="a" style="left:8px;top:1014.7px" width="12" height="15" viewBox="0 0 12 15" fill="none" stroke="#222" stroke-width="1.2" stroke-linejoin="round"><path d="M2 3.5A1 1 0 0 1 3 2.5H4.5V1.5A0.5 0.5 0 0 1 5 1H9A0.5 0.5 0 0 1 9.5 1.5V2.5H11A1 1 0 0 1 12 3.5V12.5A1 1 0 0 1 11 13.5H3A1 1 0 0 1 2 12.5Z"/><path d="M5 7H9M5 9.5H9" stroke-width="1"/></svg>
<svg class="a" style="left:1623px;top:1015.2px" width="14" height="14" viewBox="0 0 14 14" fill="none" stroke="#222" stroke-width="1.2" stroke-linejoin="round"><path d="M2 3.5A1 1 0 0 1 3 2.5H4.5V1.5A0.5 0.5 0 0 1 5 1H9A0.5 0.5 0 0 1 9.5 1.5V2.5H11A1 1 0 0 1 12 3.5V12.5A1 1 0 0 1 11 13.5H3A1 1 0 0 1 2 12.5Z"/></svg>
<div class="a stt" style="left:1642.9px">0</div>
<svg class="a" style="left:1664px;top:1015.2px" width="14" height="14" viewBox="0 0 14 14" fill="none" stroke="#222" stroke-width="1.2" stroke-linejoin="round"><rect x="1.5" y="6" width="11" height="7.5" rx="1.5"/><path d="M4 6V4A3 3 0 0 1 10 4V6M7 9V10.5"/></svg>
<div class="a stt" style="left:1682.7px">0</div>
<svg class="a" style="left:1703px;top:1015.2px" width="14" height="14" viewBox="0 0 14 14" fill="none" stroke="#222" stroke-width="1.2" stroke-linejoin="round"><path d="M6.5 1.8H3A1.5 1.5 0 0 0 1.5 3.3V11.5A1.5 1.5 0 0 0 3 13H11A1.5 1.5 0 0 0 12.5 11.5V8"/><path d="M11.2 1A1.2 1.2 0 0 1 13 2.8L7 8.8L4.8 9.3L5.3 7.1Z"/></svg>
<div class="a stt" style="left:1722.5px">8</div>
<svg class="a" style="left:1743px;top:1015.2px" width="15" height="14" viewBox="0 0 15 14" fill="none" stroke="#222" stroke-width="1.2" stroke-linejoin="round"><rect x="1" y="2.5" width="13" height="9.5" rx="1"/><path d="M1.2 3L7.5 8L13.8 3"/></svg>
<div class="a stt" style="left:1764px">1064</div>
<svg class="a" style="left:1806.5px;top:1015.2px" width="14" height="14" viewBox="0 0 14 14" fill="none" stroke="#222" stroke-width="1.2" stroke-linejoin="round"><rect x="1.2" y="2.5" width="11.6" height="10.5" rx="1.2"/><path d="M1.2 5.2H12.8M4 1V3M10 1V3"/></svg>
<div class="a stt" style="left:1825.3px">0</div>
<svg class="a" style="left:1846.5px;top:1015.2px" width="14" height="14" viewBox="0 0 14 14" fill="none" stroke="#222" stroke-width="1.2" stroke-linejoin="round"><path d="M5.5 3H13.5M5.5 7H13.5M5.5 11H13.5" stroke-width="1.4"/><path d="M0.8 2.5L1.8 3.5L3.5 1.2M0.8 6.5L1.8 7.5L3.5 5.2M1.5 11H2.2" stroke-width="1"/></svg>
<div class="a stt" style="left:1865px">3</div>
<svg class="a" style="left:1885.5px;top:1015.2px" width="16" height="14" viewBox="0 0 16 14" fill="none" stroke="#222" stroke-width="1.2" stroke-linejoin="round"><ellipse cx="4.1" cy="10" rx="3.1" ry="2.8"/><ellipse cx="11.9" cy="10" rx="3.1" ry="2.8"/><path d="M7.2 9.6Q8 8.9 8.8 9.6M1 10V3.6A1.6 1.6 0 0 1 2.6 2H3.3M15 10V3.6A1.6 1.6 0 0 0 13.4 2H12.7"/></svg>
<div class="a stt" style="left:1905.8px">1</div>
<svg class="a" style="left:856px;top:590px" width="21" height="27" viewBox="0 0 21 27"><path d="M6.2 15V2.8A1.8 1.8 0 0 1 9.8 2.8V10.5V8.6A1.5 1.5 0 0 1 12.8 8.6V11V9.4A1.5 1.5 0 0 1 15.8 9.4V11.5V10.4A1.5 1.5 0 0 1 18.8 10.4V18C18.8 22 16.8 24.6 12.6 24.6C9.8 24.6 8.2 23.4 6.6 21L1.8 16.2A1.6 1.6 0 0 1 4.2 14Z" fill="#fff" stroke="#000" stroke-width="1.2" stroke-linejoin="round"/><path d="M9.8 10.5V14.5M12.8 11V14.5M15.8 11.5V14.5" stroke="#000" stroke-width="1"/></svg>
</body></html>
